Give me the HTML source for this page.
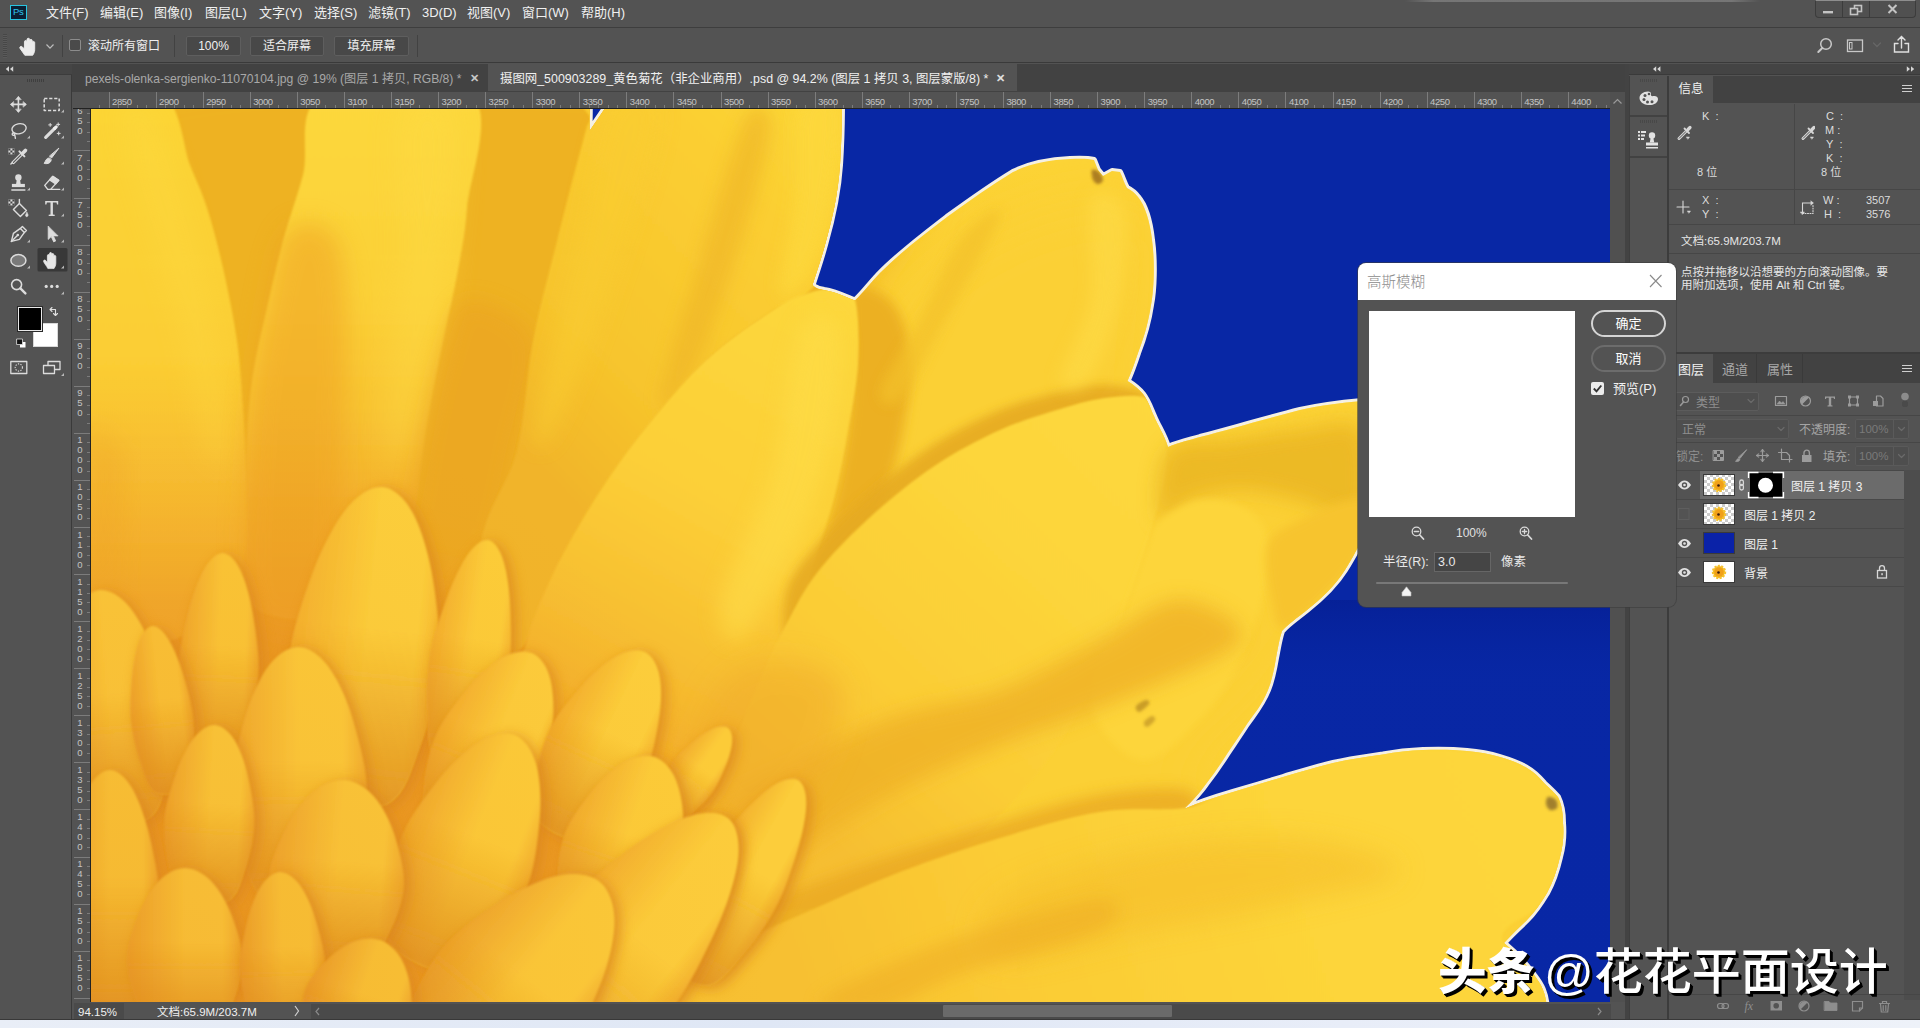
<!DOCTYPE html>
<html lang="zh-CN">
<head>
<meta charset="utf-8">
<title>Photoshop</title>
<style>
*{box-sizing:border-box;margin:0;padding:0}
html,body{width:1920px;height:1028px;overflow:hidden;background:#535353}
body{position:relative;font-family:"Liberation Sans","Noto Sans CJK SC",sans-serif;font-size:12px;color:#e6e6e6;line-height:1}
.abs{position:absolute}
.t{position:absolute;white-space:nowrap;line-height:14px;height:14px}
/* menubar */
#menubar{left:0;top:0;width:1920px;height:28px;background:#535353;border-bottom:1px solid #3e3e3e}
#menubar .t{top:6px;font-size:13px;color:#f0f0f0}
#pslogo{left:10px;top:4.500px;width:16.500px;height:15.500px;background:#0b1f33;border:1.300px solid #29c4e0;color:#31c5f0;font-size:9.500px;text-align:center;line-height:12.500px;letter-spacing:-.2px}
/* options bar */
#optbar{left:0;top:29px;width:1920px;height:34px;background:#535353;border-bottom:1px solid #3a3a3a}
.btn{position:absolute;top:7px;height:20px;background:#484848;border:1px solid #5e5e5e;border-radius:2px;text-align:center;line-height:18px;font-size:12px;color:#f0f0f0}
.vsep{position:absolute;width:1px;background:#424242}
/* tab bar */
#tabbar{left:72px;top:64px;width:1553px;height:28px;background:#424242}
#tab2{left:416px;top:0;width:529px;height:27px;background:#535353}
/* rulers */
#hruler{left:73px;top:92px;width:1537px;height:17px;background:#535353;overflow:hidden;border-bottom:1px solid #222}
#vruler{left:73px;top:109px;width:18px;height:894px;background:#535353;overflow:hidden;border-right:1px solid #222}
.rl{position:absolute;top:5px;font-size:9.5px;letter-spacing:-.4px;color:#c4c4c4;line-height:10px}
.rt{position:absolute;top:0;width:1px;height:17px;background:#7c7c7c}
.rm{position:absolute;top:13px;width:1px;height:3px;background:#7c7c7c}
.vt{position:absolute;left:1px;width:17px;height:1px;background:#7c7c7c}
.vm{position:absolute;left:14px;width:3px;height:1px;background:#7c7c7c}
.vl{position:absolute;left:3px;width:8px;text-align:center;font-size:9.5px;color:#c4c4c4;line-height:10px}
/* canvas */
#canvas{left:91px;top:109px;width:1519px;height:893px;overflow:hidden;background:#f7c62c}
/* right dock */
#rightdock{left:1669px;top:76px;width:251px;height:945px;background:#535353}
.ptabbar{position:absolute;left:0;width:251px;height:26px;background:#424242}
.ptab{position:absolute;top:0;height:26px;font-size:12px;line-height:26px;padding-top:2px;text-align:center;color:#a6a6a6}
.ptab.on{background:#535353;color:#f0f0f0}
.it{position:absolute;font-size:11px;color:#dcdcdc;white-space:nowrap;line-height:13px}
.lrow{position:absolute;left:0;width:235px;height:28px;background:#535353}
.lsel{position:absolute;left:31px;top:0;width:204px;height:28px;background:#6b6b6b}
.ln{font-size:12px;color:#f0f0f0}
.pill{width:75px;height:27px;border:2px solid #d4d4d4;border-radius:14px;text-align:center;line-height:24px;font-size:13px;color:#fff}
/* dialog */
#dlg{left:1358px;top:263px;width:318px;height:344px;background:#535353;border-radius:8px;overflow:hidden;box-shadow:0 0 0 1px rgba(60,60,60,.6)}
#dlgtitle{left:0;top:0;width:318px;height:37px;background:#fff}
</style>
</head>
<body>
<!-- MENUBAR -->
<div id="menubar" class="abs">
  <div id="pslogo" class="abs">Ps</div>
  <span class="t" style="left:46px">文件(F)</span>
  <span class="t" style="left:100px">编辑(E)</span>
  <span class="t" style="left:154px">图像(I)</span>
  <span class="t" style="left:205px">图层(L)</span>
  <span class="t" style="left:259px">文字(Y)</span>
  <span class="t" style="left:314px">选择(S)</span>
  <span class="t" style="left:368px">滤镜(T)</span>
  <span class="t" style="left:422px">3D(D)</span>
  <span class="t" style="left:467px">视图(V)</span>
  <span class="t" style="left:522px">窗口(W)</span>
  <span class="t" style="left:581px">帮助(H)</span>
  <div class="abs" style="left:1815px;top:0;width:101px;height:18px;background:#505050;border:1px solid #3c3c3c;border-top:1px solid #8e8e8e;border-radius:0 0 4px 4px"></div>
  <div class="abs" style="left:1842px;top:1px;width:1px;height:16px;background:#3c3c3c"></div>
  <div class="abs" style="left:1869px;top:1px;width:1px;height:16px;background:#3c3c3c"></div>
  <svg class="abs" style="left:1815px;top:0" width="101" height="18" viewBox="1815 0 101 18" fill="none" stroke="#c4c4c4" stroke-width="1.600"><path d="M1823,12.200h10" stroke-width="2.400"/><rect x="1854.500" y="5.500" width="7" height="6"/><rect x="1850.500" y="8.500" width="7" height="6" fill="#505050"/><path d="M1888.500,5L1896.500,13M1896.500,5L1888.500,13" stroke-width="2"/></svg>
</div>
<div class="abs" style="left:1405px;top:0;width:355px;height:2px;background:linear-gradient(90deg,rgba(160,160,160,0),rgba(160,160,160,.45) 8%,rgba(160,160,160,.45) 92%,rgba(160,160,160,0))"></div>
<!-- OPTIONS BAR -->
<div id="optbar" class="abs">
  <div class="abs" style="left:3px;top:5px;width:4px;height:24px;background:repeating-linear-gradient(#474747 0 1px,#5a5a5a 1px 2px)"></div>
  <svg class="abs" style="left:18px;top:6px" width="40" height="24" viewBox="18 35 40 24"><g transform="translate(30.300,46.600) scale(1.220,1.080)"><path d="M-4.500,8c-1-2.500-3-4-4-6.500c-.5-1.500,1-2.300,2-1.200l1.700,2V-4.500c0-1.500,2-1.500,2.100,0V-6.500c0-1.600,2.200-1.600,2.200,0V-5.500c0-1.500,2.100-1.500,2.100,0v1.700c.1-1.400,2-1.300,2,.1V3c0,2-.8,3.500-1.600,5Z" fill="#ececec" stroke="#ececec" stroke-width=".8"/></g><path d="M46.500,44.500l3.500,3.700l3.500,-3.700" fill="none" stroke="#bdbdbd" stroke-width="1.200"/></svg>
  <svg class="abs" style="left:1812px;top:5px" width="104" height="26" viewBox="1812 34 104 26" fill="none" stroke="#c8c8c8" stroke-width="1.500" stroke-linecap="round"><circle cx="1826" cy="44" r="5.300"/><path d="M1822.300,48L1818.300,52" stroke-width="2"/><rect x="1847.500" y="40" width="15" height="11.500" stroke-width="1.300"/><rect x="1849.500" y="42.500" width="2.500" height="6.500" stroke-width="1"/><path d="M1873.500,43l3.500,3.500l3.500,-3.500" stroke="#666" stroke-width="1.300"/><path d="M1898,43.500h-3.500v8.500h14v-8.500h-3.500M1901.500,48v-11M1898,40l3.500,-3.500l3.500,3.500" stroke="#e0e0e0" stroke-width="1.400"/></svg>

  <div class="vsep" style="left:62px;top:6px;height:22px"></div>
  <div class="abs" style="left:69px;top:10px;width:12px;height:12px;border:1px solid #8c8c8c;border-radius:2px;background:#4a4a4a"></div>
  <span class="t" style="left:88px;top:10px;color:#f0f0f0">滚动所有窗口</span>
  <div class="vsep" style="left:174px;top:6px;height:22px"></div>
  <div class="btn" style="left:186px;width:55px">100%</div>
  <div class="btn" style="left:250px;width:74px">适合屏幕</div>
  <div class="btn" style="left:334px;width:75px">填充屏幕</div>
  <div class="vsep" style="left:417px;top:6px;height:22px"></div>
</div>
<!-- TOOLS PANEL -->
<div id="tools" class="abs" style="left:0;top:64px;width:72px;height:957px;background:#535353;border-right:1px solid #3a3a3a">
  <div class="abs" style="left:0;top:0;width:72px;height:11px;background:#454545;border-bottom:1px solid #3c3c3c"></div>
  <svg class="abs" style="left:0;top:0" width="72" height="330" viewBox="0 64 72 330" fill="none" stroke="#dcdcdc" stroke-width="1.4" stroke-linecap="round" stroke-linejoin="round">
    <path d="M9,66.300v5.400l-3.200,-2.700ZM13.200,66.300v5.400l-3.200,-2.700Z" fill="#d6d6d6" stroke="none"/>
    <path d="M27,80.5h18" stroke="#3f3f3f" stroke-width="3" stroke-dasharray="1 1" stroke-linecap="butt"/>
    <!-- move -->
    <g transform="translate(18.4,104.4)"><path d="M0,-7V7M-7,0H7" stroke-width="1.6"/><path d="M-2.6,-5L0,-8L2.6,-5ZM-2.6,5L0,8L2.6,5ZM-5,-2.6L-8,0L-5,2.6ZM5,-2.6L8,0L5,2.6Z" fill="#dcdcdc" stroke-width=".6"/></g>
    <!-- marquee -->
    <g transform="translate(51.7,104.4)"><rect x="-7.5" y="-6" width="15" height="12" stroke-dasharray="3.2 1.8" stroke-linecap="butt" stroke-width="1.5"/></g>
    <!-- lasso -->
    <g transform="translate(18.4,130.4)"><ellipse cx="1" cy="-1.5" rx="7.2" ry="5" transform="rotate(-12)"/><path d="M-5,2.2c-1.6,.6-1.6,2.6,0,2.8c1.4,.1,1.6-1.2,.6-1.8M-3.6,4.6L-3,8"/></g>
    <!-- wand -->
    <g transform="translate(51.7,130.4)"><path d="M-6,7L3,-2" stroke-width="3.2"/><path d="M3,-2L4.5,-3.5" stroke-width="3.2" stroke="#f0f0f0"/><path d="M-1.5,-7v3M-3,-5.5h3M6.5,-7.5v3M5,-6h3M7,1.5v3M5.5,3h3" stroke-width="1"/></g>
    <!-- eyedropper -->
    <g transform="translate(18.4,156.4)"><path d="M-5,6L3,-2" stroke-width="3.4"/><path d="M-5,6L3,-2" stroke-width="1.2" stroke="#535353"/><path d="M1,-5L6,0" stroke-width="2"/><path d="M4,-3L7,-6" stroke-width="3.6"/><path d="M-7.5,7.5L-6,6" stroke-width="1.4"/><rect x="-10" y="-8" width="6" height="6" fill="#dcdcdc" stroke="none"/><path d="M-10,-8h2v2h-2zM-6,-8h2v2h-2zM-8,-6h2v2h-2zM-10,-4h2v2h-2zM-6,-4h2v2h-2z" fill="#444" stroke="none"/></g>
    <!-- brush -->
    <g transform="translate(51.7,156.4)"><path d="M7,-8L0,1.5L-2,0Z" fill="#dcdcdc" stroke-width="1"/><path d="M-2.5,1.5c-3,0-3.5,3-5,5.5c4,1,7-1,7-3.500Z" fill="#dcdcdc" stroke-width="1"/></g>
    <!-- stamp -->
    <g transform="translate(18.4,182.4)"><circle cx="0" cy="-5" r="3.2" fill="#dcdcdc" stroke="none"/><path d="M-1.6,-3h3.2l.8,5h-4.800Z" fill="#dcdcdc" stroke="none"/><rect x="-6.500" y="1.5" width="13" height="3.200" fill="#dcdcdc" stroke="none"/><path d="M-6.500,7.500h13" stroke-width="1.500"/></g>
    <!-- eraser -->
    <g transform="translate(51.7,182.4)"><path d="M-7,3L1,-6L7,-2L-1,7H-4Z"/><path d="M-2,-2.600L4,1.400L7,-2L1,-6Z" fill="#dcdcdc"/><path d="M-1,7H8"/></g>
    <!-- bucket -->
    <g transform="translate(18.4,208.4)"><path d="M-5,1L1,-5L8,2L2,8Z"/><path d="M1,-5V-9" /><path d="M8.500,4c1,1.500,1.500,2.500,1,3.500c-.5,1-2,1-2.300,0c-.3-1,.4-2,1.300-3.500Z" fill="#dcdcdc" stroke-width=".6"/><rect x="-10" y="-9" width="6" height="6" fill="#dcdcdc" stroke="none"/><path d="M-10,-9h2v2h-2zM-6,-9h2v2h-2zM-8,-7h2v2h-2zM-10,-5h2v2h-2zM-6,-5h2v2h-2z" fill="#444" stroke="none"/></g>
    <!-- T -->
    <g transform="translate(51.7,208.4)"><path d="M-6.500,-7.500H6.500V-4H5.300L4.800,-5.800H1.200V6L3,6.400V7.500H-3V6.400L-1.200,6V-5.800H-4.800L-5.300,-4H-6.500Z" fill="#dcdcdc" stroke="none"/></g>
    <!-- pen -->
    <g transform="translate(18.4,234.4)"><path d="M-7,7L-5,-1L2,-6L6,-2L1,5Z"/><path d="M-7,7L-1.500,1.500"/><circle cx="-.6" cy=".6" r="1.300" fill="#dcdcdc" stroke="none"/><path d="M2,-6L4,-8L8,-4L6,-2" /></g>
    <!-- arrow -->
    <g transform="translate(51.7,234.4)"><path d="M-3.500,-8V5L-.5,2.200L2,7.500L4,6.500L1.700,1.500H6Z" fill="#dcdcdc" stroke-width=".8"/></g>
    <!-- ellipse -->
    <g transform="translate(18.4,260.4)"><ellipse cx="0" cy="0" rx="7.500" ry="5.800" fill="#7a7a7a" stroke-width="1.500"/></g>
    <!-- hand selected -->
    <rect x="37.500" y="248" width="30" height="23.500" rx="1.500" fill="#383838" stroke="none"/>
    <g transform="translate(52.200,260.2)"><path d="M-4.500,8c-1-2.500-3-4-4-6.500c-.5-1.500,1-2.300,2-1.200l1.700,2V-4.500c0-1.500,2-1.500,2.100,0V-6.500c0-1.600,2.200-1.600,2.200,0V-5.500c0-1.500,2.100-1.500,2.100,0v1.700c.1-1.400,2-1.300,2,.1V3c0,2-.8,3.500-1.600,5Z" fill="#e6e6e6" stroke="#e6e6e6" stroke-width=".8"/></g>
    <!-- zoom -->
    <g transform="translate(18.4,286.4)"><circle cx="-1.800" cy="-1.800" r="5" stroke-width="1.600"/><path d="M2,2L7,7" stroke-width="2.400"/></g>
    <!-- dots -->
    <g transform="translate(51.700,286.4)" fill="#dcdcdc" stroke="none"><circle cx="-5.500" cy="0" r="1.600"/><circle cx="0" cy="0" r="1.600"/><circle cx="5.500" cy="0" r="1.600"/></g>
    <!-- corner flyout marks -->
    <g fill="#b8b8b8" stroke="none"><path d="M64,109.500v3h-3zM30,135.500v3h-3zM64,135.500v3h-3zM64,161.500v3h-3zM30,187.500v3h-3zM64,187.500v3h-3zM64,213.500v3h-3zM30,239.500v3h-3zM64,239.500v3h-3zM30,265.500v3h-3zM64,265.500v3h-3zM64,291.500v3h-3zM64,373v3h-3z"/></g>
    <!-- swap arrows -->
    <path d="M50,309.500h5.500v6M50,309.500l2,-2M50,309.500l2,2M55.500,315.500l-2,-2M55.500,315.500l2,-2" stroke-width="1.100" stroke="#e0e0e0"/>
    <!-- default colors -->
    <rect x="20" y="342" width="5.500" height="5.500" fill="#fff" stroke="none"/><rect x="17" y="339" width="5.500" height="5.500" fill="#111" stroke="#ddd" stroke-width=".8"/>
    <!-- quick mask -->
    <rect x="10.800" y="361.500" width="16" height="12" stroke-width="1.300"/><circle cx="18.800" cy="367.500" r="3.600" stroke-dasharray="1.300 1.300" stroke-width="1.100" stroke-linecap="butt"/>
    <!-- screen mode -->
    <rect x="48" y="361.500" width="12" height="8" stroke-width="1.300"/><rect x="43.500" y="365.500" width="11" height="8" fill="#535353" stroke-width="1.300"/>
  </svg>
  <div class="abs" style="left:33px;top:259px;width:25px;height:24px;background:#fff;border:1px solid #d8d8d8"></div>
  <div class="abs" style="left:18px;top:243px;width:24px;height:24px;background:#000;border:1px solid #e8e8e8;box-shadow:0 0 0 1px #2a2a2a"></div>
</div>
<!-- TAB BAR -->
<div id="tabbar" class="abs">
  <span class="t" style="left:13px;top:8px;color:#a8a8a8;font-size:12.150px">pexels-olenka-sergienko-11070104.jpg @ 19% (图层 1 拷贝, RGB/8) *</span>
  <span class="t" style="left:398px;top:7px;color:#c8c8c8;font-weight:bold;font-size:11px">✕</span>
  <div id="tab2" class="abs">
    <span class="t" style="left:12px;top:8px;color:#f0f0f0;font-size:12.420px">摄图网_500903289_黄色菊花（非企业商用）.psd @ 94.2% (图层 1 拷贝 3, 图层蒙版/8) *</span>
    <span class="t" style="left:508px;top:7px;color:#e0e0e0;font-weight:bold;font-size:11px">✕</span>
  </div>
</div>
<!-- RULERS -->
<div id="hruler" class="abs"><i class="rm" style="left:26.1px"></i><i class="rt" style="left:35.5px"></i><span class="rl" style="left:39.0px">2850</span><i class="rm" style="left:44.9px"></i><i class="rm" style="left:54.3px"></i><i class="rm" style="left:63.7px"></i><i class="rm" style="left:73.2px"></i><i class="rt" style="left:82.6px"></i><span class="rl" style="left:86.1px">2900</span><i class="rm" style="left:92.0px"></i><i class="rm" style="left:101.4px"></i><i class="rm" style="left:110.8px"></i><i class="rm" style="left:120.2px"></i><i class="rt" style="left:129.7px"></i><span class="rl" style="left:133.2px">2950</span><i class="rm" style="left:139.1px"></i><i class="rm" style="left:148.5px"></i><i class="rm" style="left:157.9px"></i><i class="rm" style="left:167.3px"></i><i class="rt" style="left:176.7px"></i><span class="rl" style="left:180.2px">3000</span><i class="rm" style="left:186.1px"></i><i class="rm" style="left:195.6px"></i><i class="rm" style="left:205.0px"></i><i class="rm" style="left:214.4px"></i><i class="rt" style="left:223.8px"></i><span class="rl" style="left:227.3px">3050</span><i class="rm" style="left:233.2px"></i><i class="rm" style="left:242.6px"></i><i class="rm" style="left:252.0px"></i><i class="rm" style="left:261.5px"></i><i class="rt" style="left:270.9px"></i><span class="rl" style="left:274.4px">3100</span><i class="rm" style="left:280.3px"></i><i class="rm" style="left:289.7px"></i><i class="rm" style="left:299.1px"></i><i class="rm" style="left:308.5px"></i><i class="rt" style="left:318.0px"></i><span class="rl" style="left:321.5px">3150</span><i class="rm" style="left:327.4px"></i><i class="rm" style="left:336.8px"></i><i class="rm" style="left:346.2px"></i><i class="rm" style="left:355.6px"></i><i class="rt" style="left:365.0px"></i><span class="rl" style="left:368.5px">3200</span><i class="rm" style="left:374.4px"></i><i class="rm" style="left:383.9px"></i><i class="rm" style="left:393.3px"></i><i class="rm" style="left:402.7px"></i><i class="rt" style="left:412.1px"></i><span class="rl" style="left:415.6px">3250</span><i class="rm" style="left:421.5px"></i><i class="rm" style="left:430.9px"></i><i class="rm" style="left:440.3px"></i><i class="rm" style="left:449.8px"></i><i class="rt" style="left:459.2px"></i><span class="rl" style="left:462.7px">3300</span><i class="rm" style="left:468.6px"></i><i class="rm" style="left:478.0px"></i><i class="rm" style="left:487.4px"></i><i class="rm" style="left:496.8px"></i><i class="rt" style="left:506.2px"></i><span class="rl" style="left:509.8px">3350</span><i class="rm" style="left:515.7px"></i><i class="rm" style="left:525.1px"></i><i class="rm" style="left:534.5px"></i><i class="rm" style="left:543.9px"></i><i class="rt" style="left:553.3px"></i><span class="rl" style="left:556.8px">3400</span><i class="rm" style="left:562.7px"></i><i class="rm" style="left:572.2px"></i><i class="rm" style="left:581.6px"></i><i class="rm" style="left:591.0px"></i><i class="rt" style="left:600.4px"></i><span class="rl" style="left:603.9px">3450</span><i class="rm" style="left:609.8px"></i><i class="rm" style="left:619.2px"></i><i class="rm" style="left:628.6px"></i><i class="rm" style="left:638.1px"></i><i class="rt" style="left:647.5px"></i><span class="rl" style="left:651.0px">3500</span><i class="rm" style="left:656.9px"></i><i class="rm" style="left:666.3px"></i><i class="rm" style="left:675.7px"></i><i class="rm" style="left:685.1px"></i><i class="rt" style="left:694.6px"></i><span class="rl" style="left:698.1px">3550</span><i class="rm" style="left:704.0px"></i><i class="rm" style="left:713.4px"></i><i class="rm" style="left:722.8px"></i><i class="rm" style="left:732.2px"></i><i class="rt" style="left:741.6px"></i><span class="rl" style="left:745.1px">3600</span><i class="rm" style="left:751.0px"></i><i class="rm" style="left:760.5px"></i><i class="rm" style="left:769.9px"></i><i class="rm" style="left:779.3px"></i><i class="rt" style="left:788.7px"></i><span class="rl" style="left:792.2px">3650</span><i class="rm" style="left:798.1px"></i><i class="rm" style="left:807.5px"></i><i class="rm" style="left:816.9px"></i><i class="rm" style="left:826.4px"></i><i class="rt" style="left:835.8px"></i><span class="rl" style="left:839.3px">3700</span><i class="rm" style="left:845.2px"></i><i class="rm" style="left:854.6px"></i><i class="rm" style="left:864.0px"></i><i class="rm" style="left:873.4px"></i><i class="rt" style="left:882.9px"></i><span class="rl" style="left:886.4px">3750</span><i class="rm" style="left:892.3px"></i><i class="rm" style="left:901.7px"></i><i class="rm" style="left:911.1px"></i><i class="rm" style="left:920.5px"></i><i class="rt" style="left:929.9px"></i><span class="rl" style="left:933.4px">3800</span><i class="rm" style="left:939.3px"></i><i class="rm" style="left:948.8px"></i><i class="rm" style="left:958.2px"></i><i class="rm" style="left:967.6px"></i><i class="rt" style="left:977.0px"></i><span class="rl" style="left:980.5px">3850</span><i class="rm" style="left:986.4px"></i><i class="rm" style="left:995.8px"></i><i class="rm" style="left:1005.2px"></i><i class="rm" style="left:1014.7px"></i><i class="rt" style="left:1024.1px"></i><span class="rl" style="left:1027.6px">3900</span><i class="rm" style="left:1033.5px"></i><i class="rm" style="left:1042.9px"></i><i class="rm" style="left:1052.3px"></i><i class="rm" style="left:1061.7px"></i><i class="rt" style="left:1071.2px"></i><span class="rl" style="left:1074.7px">3950</span><i class="rm" style="left:1080.6px"></i><i class="rm" style="left:1090.0px"></i><i class="rm" style="left:1099.4px"></i><i class="rm" style="left:1108.8px"></i><i class="rt" style="left:1118.2px"></i><span class="rl" style="left:1121.7px">4000</span><i class="rm" style="left:1127.6px"></i><i class="rm" style="left:1137.1px"></i><i class="rm" style="left:1146.5px"></i><i class="rm" style="left:1155.9px"></i><i class="rt" style="left:1165.3px"></i><span class="rl" style="left:1168.8px">4050</span><i class="rm" style="left:1174.7px"></i><i class="rm" style="left:1184.1px"></i><i class="rm" style="left:1193.5px"></i><i class="rm" style="left:1203.0px"></i><i class="rt" style="left:1212.4px"></i><span class="rl" style="left:1215.9px">4100</span><i class="rm" style="left:1221.8px"></i><i class="rm" style="left:1231.2px"></i><i class="rm" style="left:1240.6px"></i><i class="rm" style="left:1250.0px"></i><i class="rt" style="left:1259.5px"></i><span class="rl" style="left:1263.0px">4150</span><i class="rm" style="left:1268.9px"></i><i class="rm" style="left:1278.3px"></i><i class="rm" style="left:1287.7px"></i><i class="rm" style="left:1297.1px"></i><i class="rt" style="left:1306.5px"></i><span class="rl" style="left:1310.0px">4200</span><i class="rm" style="left:1315.9px"></i><i class="rm" style="left:1325.4px"></i><i class="rm" style="left:1334.8px"></i><i class="rm" style="left:1344.2px"></i><i class="rt" style="left:1353.6px"></i><span class="rl" style="left:1357.1px">4250</span><i class="rm" style="left:1363.0px"></i><i class="rm" style="left:1372.4px"></i><i class="rm" style="left:1381.8px"></i><i class="rm" style="left:1391.3px"></i><i class="rt" style="left:1400.7px"></i><span class="rl" style="left:1404.2px">4300</span><i class="rm" style="left:1410.1px"></i><i class="rm" style="left:1419.5px"></i><i class="rm" style="left:1428.9px"></i><i class="rm" style="left:1438.3px"></i><i class="rt" style="left:1447.8px"></i><span class="rl" style="left:1451.2px">4350</span><i class="rm" style="left:1457.2px"></i><i class="rm" style="left:1466.6px"></i><i class="rm" style="left:1476.0px"></i><i class="rm" style="left:1485.4px"></i><i class="rt" style="left:1494.8px"></i><span class="rl" style="left:1498.3px">4400</span><i class="rm" style="left:1504.2px"></i><i class="rm" style="left:1513.7px"></i><i class="rm" style="left:1523.1px"></i><i class="rm" style="left:1532.5px"></i></div>
<div id="vruler" class="abs"><i class="vt" style="top:-5.7px"></i><span class="vl" style="top:-3.2px">6</span><span class="vl" style="top:6.8px">5</span><span class="vl" style="top:16.8px">0</span><i class="vm" style="top:3.7px"></i><i class="vm" style="top:13.1px"></i><i class="vm" style="top:22.5px"></i><i class="vm" style="top:32.0px"></i><i class="vt" style="top:41.4px"></i><span class="vl" style="top:43.9px">7</span><span class="vl" style="top:53.9px">0</span><span class="vl" style="top:63.9px">0</span><i class="vm" style="top:50.8px"></i><i class="vm" style="top:60.2px"></i><i class="vm" style="top:69.6px"></i><i class="vm" style="top:79.0px"></i><i class="vt" style="top:88.5px"></i><span class="vl" style="top:91.0px">7</span><span class="vl" style="top:101.0px">5</span><span class="vl" style="top:111.0px">0</span><i class="vm" style="top:97.9px"></i><i class="vm" style="top:107.3px"></i><i class="vm" style="top:116.7px"></i><i class="vm" style="top:126.1px"></i><i class="vt" style="top:135.5px"></i><span class="vl" style="top:138.0px">8</span><span class="vl" style="top:148.0px">0</span><span class="vl" style="top:158.0px">0</span><i class="vm" style="top:144.9px"></i><i class="vm" style="top:154.4px"></i><i class="vm" style="top:163.8px"></i><i class="vm" style="top:173.2px"></i><i class="vt" style="top:182.6px"></i><span class="vl" style="top:185.1px">8</span><span class="vl" style="top:195.1px">5</span><span class="vl" style="top:205.1px">0</span><i class="vm" style="top:192.0px"></i><i class="vm" style="top:201.4px"></i><i class="vm" style="top:210.8px"></i><i class="vm" style="top:220.3px"></i><i class="vt" style="top:229.7px"></i><span class="vl" style="top:232.2px">9</span><span class="vl" style="top:242.2px">0</span><span class="vl" style="top:252.2px">0</span><i class="vm" style="top:239.1px"></i><i class="vm" style="top:248.5px"></i><i class="vm" style="top:257.9px"></i><i class="vm" style="top:267.3px"></i><i class="vt" style="top:276.8px"></i><span class="vl" style="top:279.3px">9</span><span class="vl" style="top:289.3px">5</span><span class="vl" style="top:299.3px">0</span><i class="vm" style="top:286.2px"></i><i class="vm" style="top:295.6px"></i><i class="vm" style="top:305.0px"></i><i class="vm" style="top:314.4px"></i><i class="vt" style="top:323.8px"></i><span class="vl" style="top:326.3px">1</span><span class="vl" style="top:336.3px">0</span><span class="vl" style="top:346.3px">0</span><span class="vl" style="top:356.3px">0</span><i class="vm" style="top:333.2px"></i><i class="vm" style="top:342.7px"></i><i class="vm" style="top:352.1px"></i><i class="vm" style="top:361.5px"></i><i class="vt" style="top:370.9px"></i><span class="vl" style="top:373.4px">1</span><span class="vl" style="top:383.4px">0</span><span class="vl" style="top:393.4px">5</span><span class="vl" style="top:403.4px">0</span><i class="vm" style="top:380.3px"></i><i class="vm" style="top:389.7px"></i><i class="vm" style="top:399.1px"></i><i class="vm" style="top:408.6px"></i><i class="vt" style="top:418.0px"></i><span class="vl" style="top:420.5px">1</span><span class="vl" style="top:430.5px">1</span><span class="vl" style="top:440.5px">0</span><span class="vl" style="top:450.5px">0</span><i class="vm" style="top:427.4px"></i><i class="vm" style="top:436.8px"></i><i class="vm" style="top:446.2px"></i><i class="vm" style="top:455.6px"></i><i class="vt" style="top:465.1px"></i><span class="vl" style="top:467.6px">1</span><span class="vl" style="top:477.6px">1</span><span class="vl" style="top:487.6px">5</span><span class="vl" style="top:497.6px">0</span><i class="vm" style="top:474.5px"></i><i class="vm" style="top:483.9px"></i><i class="vm" style="top:493.3px"></i><i class="vm" style="top:502.7px"></i><i class="vt" style="top:512.1px"></i><span class="vl" style="top:514.6px">1</span><span class="vl" style="top:524.6px">2</span><span class="vl" style="top:534.6px">0</span><span class="vl" style="top:544.6px">0</span><i class="vm" style="top:521.5px"></i><i class="vm" style="top:531.0px"></i><i class="vm" style="top:540.4px"></i><i class="vm" style="top:549.8px"></i><i class="vt" style="top:559.2px"></i><span class="vl" style="top:561.7px">1</span><span class="vl" style="top:571.7px">2</span><span class="vl" style="top:581.7px">5</span><span class="vl" style="top:591.7px">0</span><i class="vm" style="top:568.6px"></i><i class="vm" style="top:578.0px"></i><i class="vm" style="top:587.4px"></i><i class="vm" style="top:596.9px"></i><i class="vt" style="top:606.3px"></i><span class="vl" style="top:608.8px">1</span><span class="vl" style="top:618.8px">3</span><span class="vl" style="top:628.8px">0</span><span class="vl" style="top:638.8px">0</span><i class="vm" style="top:615.7px"></i><i class="vm" style="top:625.1px"></i><i class="vm" style="top:634.5px"></i><i class="vm" style="top:643.9px"></i><i class="vt" style="top:653.4px"></i><span class="vl" style="top:655.9px">1</span><span class="vl" style="top:665.9px">3</span><span class="vl" style="top:675.9px">5</span><span class="vl" style="top:685.9px">0</span><i class="vm" style="top:662.8px"></i><i class="vm" style="top:672.2px"></i><i class="vm" style="top:681.6px"></i><i class="vm" style="top:691.0px"></i><i class="vt" style="top:700.4px"></i><span class="vl" style="top:702.9px">1</span><span class="vl" style="top:712.9px">4</span><span class="vl" style="top:722.9px">0</span><span class="vl" style="top:732.9px">0</span><i class="vm" style="top:709.8px"></i><i class="vm" style="top:719.3px"></i><i class="vm" style="top:728.7px"></i><i class="vm" style="top:738.1px"></i><i class="vt" style="top:747.5px"></i><span class="vl" style="top:750.0px">1</span><span class="vl" style="top:760.0px">4</span><span class="vl" style="top:770.0px">5</span><span class="vl" style="top:780.0px">0</span><i class="vm" style="top:756.9px"></i><i class="vm" style="top:766.3px"></i><i class="vm" style="top:775.7px"></i><i class="vm" style="top:785.2px"></i><i class="vt" style="top:794.6px"></i><span class="vl" style="top:797.1px">1</span><span class="vl" style="top:807.1px">5</span><span class="vl" style="top:817.1px">0</span><span class="vl" style="top:827.1px">0</span><i class="vm" style="top:804.0px"></i><i class="vm" style="top:813.4px"></i><i class="vm" style="top:822.8px"></i><i class="vm" style="top:832.2px"></i><i class="vt" style="top:841.6px"></i><span class="vl" style="top:844.1px">1</span><span class="vl" style="top:854.1px">5</span><span class="vl" style="top:864.1px">5</span><span class="vl" style="top:874.1px">0</span><i class="vm" style="top:851.1px"></i><i class="vm" style="top:860.5px"></i><i class="vm" style="top:869.9px"></i><i class="vm" style="top:879.3px"></i><i class="vt" style="top:888.7px"></i><span class="vl" style="top:891.2px">1</span><span class="vl" style="top:901.2px">6</span><span class="vl" style="top:911.2px">0</span><span class="vl" style="top:921.2px">0</span><i class="vm" style="top:898.1px"></i><i class="vm" style="top:907.6px"></i><i class="vm" style="top:917.0px"></i><i class="vm" style="top:926.4px"></i></div>
<!-- CANVAS -->
<div id="canvas" class="abs">
<svg id="flower" width="1519" height="893" viewBox="91 109 1519 893" style="display:block">
<defs><linearGradient id="g1" gradientUnits="userSpaceOnUse" x1="0" y1="600" x2="0" y2="1002"><stop offset="0" stop-color="#041c8e" stop-opacity="0.6"/><stop offset="0.2" stop-color="#0726a2" stop-opacity="0.2"/><stop offset="1" stop-color="#0a2aa8" stop-opacity="0"/></linearGradient><clipPath id="fc"><path d="M85,100 L589.5,100 L589.8,109 L589.5,131 L604.5,109 L604.5,100 L842,100 C842,125 841,150 840,165 C838,195 832,220 825.5,243 C821,260 816,274 812.5,285 C816,289 820,289 824,290 C836,292 846,297 855,300.5 C864,292 872,281 880,273 C902,251 925,234 947,217 C969,201 990,186 1013,172 C1031,163 1050,160 1070,159 C1080,158.5 1088,158.5 1094,160 L1098,170 L1103,176 L1112,171 L1120,172 C1123,178 1124,183 1127,188 C1131,190 1135,193 1138,197 C1145,205 1150,222 1152,240 C1155,262 1154,290 1151,305 C1148,325 1143,340 1138,353 C1134,365 1131,373 1127.5,381 C1134,385 1139,389 1143,394 C1149,402 1151,410 1154,416 C1158,426 1164,434 1168,447 C1180,442 1190,440 1200,437 C1230,429 1265,419 1300,410 C1322,405 1340,403 1362,401 L1362,540 C1355,553 1350,562 1345,570 C1335,586 1322,598 1307,610 C1297,618 1288,624 1282,631 C1279,640 1278,648 1276,658 C1274,670 1272,680 1268,690 C1262,705 1254,714 1247,724 C1240,735 1233,745 1227,754 C1220,765 1213,775 1206,784 C1199,794 1192,801 1184,809 C1200,802 1216,797 1233,792 C1250,787 1266,782 1283,777 C1300,772 1316,767 1333,763 C1350,759 1366,757 1383,754.5 C1396,752 1410,750.5 1423,750 C1438,749.5 1452,749.5 1467,751 C1479,752 1490,754 1500,757 C1510,760 1519,763 1527,768 C1534,772 1539,777 1544,783 C1548,787 1552,790 1558,797 C1562,805 1563,814 1563,823 C1564,835 1563,846 1560,857 C1557,870 1553,882 1547,893 C1541,903 1535,912 1527,920 C1520,927 1512,934 1504,943 C1515,952 1526,964 1534,975 C1541,984 1546,992 1547,1010 L85,1010 Z"/></clipPath><radialGradient id="g2" gradientUnits="userSpaceOnUse" cx="140" cy="1010" r="1250"><stop offset="0" stop-color="#eda02a"/><stop offset="0.3" stop-color="#f0a82b"/><stop offset="0.5" stop-color="#f3b32b"/><stop offset="0.6" stop-color="#f6c22d"/><stop offset="0.8" stop-color="#fbcf33"/><stop offset="1" stop-color="#fcd335"/></radialGradient><filter id="b20" x="-40%" y="-40%" width="180%" height="180%"><feGaussianBlur stdDeviation="20"/></filter><filter id="b30" x="-40%" y="-40%" width="180%" height="180%"><feGaussianBlur stdDeviation="30"/></filter><linearGradient id="g3" gradientUnits="userSpaceOnUse" x1="0" y1="100" x2="0" y2="610"><stop offset="0" stop-color="#fcd536"/><stop offset="0.5" stop-color="#fbce34"/><stop offset="0.7" stop-color="#f8c031"/><stop offset="0.9" stop-color="#f3af2c"/><stop offset="1" stop-color="#f0a62b"/></linearGradient><filter id="b1" x="-40%" y="-40%" width="180%" height="180%"><feGaussianBlur stdDeviation="1"/></filter><filter id="b14" x="-40%" y="-40%" width="180%" height="180%"><feGaussianBlur stdDeviation="14"/></filter><filter id="b12" x="-40%" y="-40%" width="180%" height="180%"><feGaussianBlur stdDeviation="12"/></filter><linearGradient id="g4" gradientUnits="userSpaceOnUse" x1="0" y1="100" x2="0" y2="610"><stop offset="0" stop-color="#fdd83c"/><stop offset="0.4" stop-color="#fbd038"/><stop offset="0.6" stop-color="#f8c432"/><stop offset="0.8" stop-color="#f3b12c"/><stop offset="1" stop-color="#eea129"/></linearGradient><filter id="b10" x="-40%" y="-40%" width="180%" height="180%"><feGaussianBlur stdDeviation="10"/></filter><linearGradient id="g5" gradientUnits="userSpaceOnUse" x1="520" y1="450" x2="840" y2="150"><stop offset="0" stop-color="#f1b42a"/><stop offset="0.3" stop-color="#f7c52d"/><stop offset="0.8" stop-color="#fbcf32"/><stop offset="1" stop-color="#fcd537"/></linearGradient><filter id="b8" x="-40%" y="-40%" width="180%" height="180%"><feGaussianBlur stdDeviation="8"/></filter><filter id="b6" x="-40%" y="-40%" width="180%" height="180%"><feGaussianBlur stdDeviation="6"/></filter><linearGradient id="g6" gradientUnits="userSpaceOnUse" x1="600" y1="720" x2="840" y2="295"><stop offset="0" stop-color="#f3b02c"/><stop offset="0.2" stop-color="#f7bf31"/><stop offset="0.5" stop-color="#fccf38"/><stop offset="1" stop-color="#fdd83c"/></linearGradient><filter id="b5" x="-40%" y="-40%" width="180%" height="180%"><feGaussianBlur stdDeviation="5"/></filter><linearGradient id="g7" gradientUnits="userSpaceOnUse" x1="780" y1="800" x2="1150" y2="400"><stop offset="0" stop-color="#f6be30"/><stop offset="0.3" stop-color="#fbcd36"/><stop offset="0.7" stop-color="#fdd63b"/><stop offset="1" stop-color="#fdd83d"/></linearGradient><filter id="b3" x="-40%" y="-40%" width="180%" height="180%"><feGaussianBlur stdDeviation="3"/></filter><filter id="b7" x="-40%" y="-40%" width="180%" height="180%"><feGaussianBlur stdDeviation="7"/></filter><linearGradient id="g8" gradientUnits="userSpaceOnUse" x1="800" y1="1000" x2="1500" y2="760"><stop offset="0" stop-color="#f7c030"/><stop offset="0.3" stop-color="#fbcc35"/><stop offset="0.7" stop-color="#fdd53a"/><stop offset="1" stop-color="#fdd63a"/></linearGradient><linearGradient id="g9" gradientUnits="userSpaceOnUse" x1="284.5" y1="634.8" x2="448.5" y2="652.2"><stop offset="0" stop-color="#f3ae2c"/><stop offset="0.5" stop-color="#fcce3a"/><stop offset="0.8" stop-color="#fcce3a"/><stop offset="1" stop-color="#f3ae2c"/></linearGradient><linearGradient id="g10" gradientUnits="userSpaceOnUse" x1="350" y1="800" x2="368.1" y2="627.9"><stop offset="0" stop-color="#d9841a" stop-opacity="0.7"/><stop offset="1" stop-color="#d9841a" stop-opacity="0"/></linearGradient><linearGradient id="g11" gradientUnits="userSpaceOnUse" x1="428" y1="643.5" x2="515" y2="656.5"><stop offset="0" stop-color="#f2ab2b"/><stop offset="0.5" stop-color="#fccc39"/><stop offset="0.8" stop-color="#fccc39"/><stop offset="1" stop-color="#f2ab2b"/></linearGradient><linearGradient id="g12" gradientUnits="userSpaceOnUse" x1="455" y1="760" x2="473.1" y2="639"><stop offset="0" stop-color="#d9841a" stop-opacity="0.7"/><stop offset="1" stop-color="#d9841a" stop-opacity="0"/></linearGradient><linearGradient id="g13" gradientUnits="userSpaceOnUse" x1="175" y1="654.8" x2="263" y2="658.2"><stop offset="0" stop-color="#eea229"/><stop offset="0.5" stop-color="#fac536"/><stop offset="0.8" stop-color="#fac536"/><stop offset="1" stop-color="#eea229"/></linearGradient><linearGradient id="g14" gradientUnits="userSpaceOnUse" x1="215" y1="760" x2="219.4" y2="646.1"><stop offset="0" stop-color="#d9841a" stop-opacity="0.7"/><stop offset="1" stop-color="#d9841a" stop-opacity="0"/></linearGradient><linearGradient id="g15" gradientUnits="userSpaceOnUse" x1="44.2" y1="710.7" x2="175.8" y2="699.3"><stop offset="0" stop-color="#eda029"/><stop offset="0.5" stop-color="#fac637"/><stop offset="0.8" stop-color="#fac637"/><stop offset="1" stop-color="#eda029"/></linearGradient><linearGradient id="g16" gradientUnits="userSpaceOnUse" x1="120" y1="820" x2="109" y2="693.5"><stop offset="0" stop-color="#d9841a" stop-opacity="0.7"/><stop offset="1" stop-color="#d9841a" stop-opacity="0"/></linearGradient><linearGradient id="g17" gradientUnits="userSpaceOnUse" x1="127.1" y1="711.7" x2="194.9" y2="704.3"><stop offset="0" stop-color="#eb9c27"/><stop offset="0.5" stop-color="#f9c134"/><stop offset="0.8" stop-color="#f9c134"/><stop offset="1" stop-color="#eb9c27"/></linearGradient><linearGradient id="g18" gradientUnits="userSpaceOnUse" x1="170" y1="790" x2="160.1" y2="699.8"><stop offset="0" stop-color="#d9841a" stop-opacity="0.7"/><stop offset="1" stop-color="#d9841a" stop-opacity="0"/></linearGradient><linearGradient id="g19" gradientUnits="userSpaceOnUse" x1="435" y1="722.4" x2="552" y2="770.6"><stop offset="0" stop-color="#f2aa2b"/><stop offset="0.5" stop-color="#fccc3a"/><stop offset="0.8" stop-color="#fccc3a"/><stop offset="1" stop-color="#f2aa2b"/></linearGradient><linearGradient id="g20" gradientUnits="userSpaceOnUse" x1="455" y1="840" x2="497.4" y2="737.1"><stop offset="0" stop-color="#d9841a" stop-opacity="0.7"/><stop offset="1" stop-color="#d9841a" stop-opacity="0"/></linearGradient><linearGradient id="g21" gradientUnits="userSpaceOnUse" x1="550.4" y1="716.1" x2="654.6" y2="765.9"><stop offset="0" stop-color="#f2ab2b"/><stop offset="0.5" stop-color="#fccd3a"/><stop offset="0.8" stop-color="#fccd3a"/><stop offset="1" stop-color="#f2ab2b"/></linearGradient><linearGradient id="g22" gradientUnits="userSpaceOnUse" x1="560" y1="830" x2="606.8" y2="732.1"><stop offset="0" stop-color="#d9841a" stop-opacity="0.7"/><stop offset="1" stop-color="#d9841a" stop-opacity="0"/></linearGradient><linearGradient id="g23" gradientUnits="userSpaceOnUse" x1="224.8" y1="774.1" x2="373.2" y2="772.9"><stop offset="0" stop-color="#eea42a"/><stop offset="0.5" stop-color="#fbc939"/><stop offset="0.8" stop-color="#fbc939"/><stop offset="1" stop-color="#eea42a"/></linearGradient><linearGradient id="g24" gradientUnits="userSpaceOnUse" x1="300" y1="900" x2="298.9" y2="760.9"><stop offset="0" stop-color="#d9841a" stop-opacity="0.7"/><stop offset="1" stop-color="#d9841a" stop-opacity="0"/></linearGradient><linearGradient id="g25" gradientUnits="userSpaceOnUse" x1="160.6" y1="809.7" x2="259.4" y2="815.3"><stop offset="0" stop-color="#eda029"/><stop offset="0.5" stop-color="#fac737"/><stop offset="0.8" stop-color="#fac737"/><stop offset="1" stop-color="#eda029"/></linearGradient><linearGradient id="g26" gradientUnits="userSpaceOnUse" x1="205" y1="900" x2="210.5" y2="803.8"><stop offset="0" stop-color="#d9841a" stop-opacity="0.7"/><stop offset="1" stop-color="#d9841a" stop-opacity="0"/></linearGradient><linearGradient id="g27" gradientUnits="userSpaceOnUse" x1="55" y1="890" x2="165" y2="890"><stop offset="0" stop-color="#ea9a27"/><stop offset="0.5" stop-color="#f9c335"/><stop offset="0.8" stop-color="#f9c335"/><stop offset="1" stop-color="#ea9a27"/></linearGradient><linearGradient id="g28" gradientUnits="userSpaceOnUse" x1="110" y1="1010" x2="110" y2="878"><stop offset="0" stop-color="#d9841a" stop-opacity="0.7"/><stop offset="1" stop-color="#d9841a" stop-opacity="0"/></linearGradient><linearGradient id="g29" gradientUnits="userSpaceOnUse" x1="674.2" y1="755.4" x2="718.8" y2="787.6"><stop offset="0" stop-color="#f0a92b"/><stop offset="0.5" stop-color="#fccb39"/><stop offset="0.8" stop-color="#fccb39"/><stop offset="1" stop-color="#f0a92b"/></linearGradient><linearGradient id="g30" gradientUnits="userSpaceOnUse" x1="665" y1="815" x2="699.6" y2="767.1"><stop offset="0" stop-color="#d9841a" stop-opacity="0.7"/><stop offset="1" stop-color="#d9841a" stop-opacity="0"/></linearGradient><linearGradient id="g31" gradientUnits="userSpaceOnUse" x1="703.1" y1="854.8" x2="784.9" y2="900.2"><stop offset="0" stop-color="#f0a92b"/><stop offset="0.5" stop-color="#fccd3a"/><stop offset="0.8" stop-color="#fccd3a"/><stop offset="1" stop-color="#f0a92b"/></linearGradient><linearGradient id="g32" gradientUnits="userSpaceOnUse" x1="690" y1="975" x2="749.4" y2="867.8"><stop offset="0" stop-color="#d9841a" stop-opacity="0.7"/><stop offset="1" stop-color="#d9841a" stop-opacity="0"/></linearGradient><linearGradient id="g33" gradientUnits="userSpaceOnUse" x1="635.1" y1="872.3" x2="713.9" y2="922.7"><stop offset="0" stop-color="#efa62a"/><stop offset="0.5" stop-color="#fccb39"/><stop offset="0.8" stop-color="#fccb39"/><stop offset="1" stop-color="#efa62a"/></linearGradient><linearGradient id="g34" gradientUnits="userSpaceOnUse" x1="625" y1="975" x2="679.5" y2="889.8"><stop offset="0" stop-color="#d9841a" stop-opacity="0.7"/><stop offset="1" stop-color="#d9841a" stop-opacity="0"/></linearGradient><linearGradient id="g35" gradientUnits="userSpaceOnUse" x1="401.1" y1="819.9" x2="538.9" y2="875.1"><stop offset="0" stop-color="#efa62a"/><stop offset="0.5" stop-color="#fccb39"/><stop offset="0.8" stop-color="#fccb39"/><stop offset="1" stop-color="#efa62a"/></linearGradient><linearGradient id="g36" gradientUnits="userSpaceOnUse" x1="425" y1="960" x2="474.5" y2="836.2"><stop offset="0" stop-color="#d9841a" stop-opacity="0.7"/><stop offset="1" stop-color="#d9841a" stop-opacity="0"/></linearGradient><linearGradient id="g37" gradientUnits="userSpaceOnUse" x1="263.5" y1="863.8" x2="411.5" y2="876.2"><stop offset="0" stop-color="#eda12a"/><stop offset="0.5" stop-color="#fac738"/><stop offset="0.8" stop-color="#fac738"/><stop offset="1" stop-color="#eda12a"/></linearGradient><linearGradient id="g38" gradientUnits="userSpaceOnUse" x1="330" y1="960" x2="338.2" y2="861"><stop offset="0" stop-color="#d9841a" stop-opacity="0.7"/><stop offset="1" stop-color="#d9841a" stop-opacity="0"/></linearGradient><linearGradient id="g39" gradientUnits="userSpaceOnUse" x1="562.6" y1="821.9" x2="687.4" y2="865.1"><stop offset="0" stop-color="#f0a92b"/><stop offset="0.5" stop-color="#fccb39"/><stop offset="0.8" stop-color="#fccb39"/><stop offset="1" stop-color="#f0a92b"/></linearGradient><linearGradient id="g40" gradientUnits="userSpaceOnUse" x1="595" y1="930" x2="628" y2="834.9"><stop offset="0" stop-color="#d9841a" stop-opacity="0.7"/><stop offset="1" stop-color="#d9841a" stop-opacity="0"/></linearGradient><linearGradient id="g41" gradientUnits="userSpaceOnUse" x1="121.8" y1="949" x2="248.2" y2="949"><stop offset="0" stop-color="#eb9d28"/><stop offset="0.5" stop-color="#fac537"/><stop offset="0.8" stop-color="#fac537"/><stop offset="1" stop-color="#eb9d28"/></linearGradient><linearGradient id="g42" gradientUnits="userSpaceOnUse" x1="185" y1="1030" x2="185" y2="940.9"><stop offset="0" stop-color="#d9841a" stop-opacity="0.7"/><stop offset="1" stop-color="#d9841a" stop-opacity="0"/></linearGradient><linearGradient id="g43" gradientUnits="userSpaceOnUse" x1="235.8" y1="957.4" x2="329.2" y2="954.6"><stop offset="0" stop-color="#ea9a27"/><stop offset="0.5" stop-color="#f9c336"/><stop offset="0.8" stop-color="#f9c336"/><stop offset="1" stop-color="#ea9a27"/></linearGradient><linearGradient id="g44" gradientUnits="userSpaceOnUse" x1="285" y1="1040" x2="282.2" y2="947.6"><stop offset="0" stop-color="#d9841a" stop-opacity="0.7"/><stop offset="1" stop-color="#d9841a" stop-opacity="0"/></linearGradient><linearGradient id="g45" gradientUnits="userSpaceOnUse" x1="559.4" y1="897.7" x2="688.6" y2="1000.3"><stop offset="0" stop-color="#f0a82b"/><stop offset="0.5" stop-color="#fccc3a"/><stop offset="0.8" stop-color="#fccc3a"/><stop offset="1" stop-color="#f0a82b"/></linearGradient><linearGradient id="g46" gradientUnits="userSpaceOnUse" x1="520" y1="1080" x2="634.4" y2="935.9"><stop offset="0" stop-color="#d9841a" stop-opacity="0.7"/><stop offset="1" stop-color="#d9841a" stop-opacity="0"/></linearGradient><linearGradient id="g47" gradientUnits="userSpaceOnUse" x1="446.9" y1="930.3" x2="583.1" y2="1041.7"><stop offset="0" stop-color="#eda22a"/><stop offset="0.5" stop-color="#fbc939"/><stop offset="0.8" stop-color="#fbc939"/><stop offset="1" stop-color="#eda22a"/></linearGradient><linearGradient id="g48" gradientUnits="userSpaceOnUse" x1="430" y1="1090" x2="523.5" y2="975.6"><stop offset="0" stop-color="#d9841a" stop-opacity="0.7"/><stop offset="1" stop-color="#d9841a" stop-opacity="0"/></linearGradient><linearGradient id="g49" gradientUnits="userSpaceOnUse" x1="302.6" y1="980.9" x2="417.4" y2="1019.1"><stop offset="0" stop-color="#e99827"/><stop offset="0.5" stop-color="#f9c336"/><stop offset="0.8" stop-color="#f9c336"/><stop offset="1" stop-color="#e99827"/></linearGradient><linearGradient id="g50" gradientUnits="userSpaceOnUse" x1="340" y1="1060" x2="362" y2="994"><stop offset="0" stop-color="#d9841a" stop-opacity="0.7"/><stop offset="1" stop-color="#d9841a" stop-opacity="0"/></linearGradient><radialGradient id="g51" gradientUnits="userSpaceOnUse" cx="130" cy="1010" r="640"><stop offset="0" stop-color="#e58a22" stop-opacity="0.2"/><stop offset="0.5" stop-color="#e8902a" stop-opacity="0.1"/><stop offset="1" stop-color="#e8902a" stop-opacity="0"/></radialGradient><filter id="b1.5" x="-40%" y="-40%" width="180%" height="180%"><feGaussianBlur stdDeviation="1.5"/></filter></defs>
<rect x="91" y="109" width="1519" height="893" fill="#0827a5"/>
<rect x="1180" y="600" width="430" height="402" fill="url(#g1)"/>
<path d="M85,100 L589.5,100 L589.8,109 L589.5,131 L604.5,109 L604.5,100 L842,100 C842,125 841,150 840,165 C838,195 832,220 825.5,243 C821,260 816,274 812.5,285 C816,289 820,289 824,290 C836,292 846,297 855,300.5 C864,292 872,281 880,273 C902,251 925,234 947,217 C969,201 990,186 1013,172 C1031,163 1050,160 1070,159 C1080,158.5 1088,158.5 1094,160 L1098,170 L1103,176 L1112,171 L1120,172 C1123,178 1124,183 1127,188 C1131,190 1135,193 1138,197 C1145,205 1150,222 1152,240 C1155,262 1154,290 1151,305 C1148,325 1143,340 1138,353 C1134,365 1131,373 1127.5,381 C1134,385 1139,389 1143,394 C1149,402 1151,410 1154,416 C1158,426 1164,434 1168,447 C1180,442 1190,440 1200,437 C1230,429 1265,419 1300,410 C1322,405 1340,403 1362,401 L1362,540 C1355,553 1350,562 1345,570 C1335,586 1322,598 1307,610 C1297,618 1288,624 1282,631 C1279,640 1278,648 1276,658 C1274,670 1272,680 1268,690 C1262,705 1254,714 1247,724 C1240,735 1233,745 1227,754 C1220,765 1213,775 1206,784 C1199,794 1192,801 1184,809 C1200,802 1216,797 1233,792 C1250,787 1266,782 1283,777 C1300,772 1316,767 1333,763 C1350,759 1366,757 1383,754.5 C1396,752 1410,750.5 1423,750 C1438,749.5 1452,749.5 1467,751 C1479,752 1490,754 1500,757 C1510,760 1519,763 1527,768 C1534,772 1539,777 1544,783 C1548,787 1552,790 1558,797 C1562,805 1563,814 1563,823 C1564,835 1563,846 1560,857 C1557,870 1553,882 1547,893 C1541,903 1535,912 1527,920 C1520,927 1512,934 1504,943 C1515,952 1526,964 1534,975 C1541,984 1546,992 1547,1010 L85,1010 Z" fill="none" stroke="#f5f0e2" stroke-width="6" stroke-linejoin="round"/>
<g clip-path="url(#fc)">
<rect x="85" y="100" width="1530" height="910" fill="url(#g2)"/>
<path d="M85,100C214.2,23.3 730.8,66.7 860,100C989.2,133.3 886.7,246.7 860,300C833.3,353.3 750,376.7 700,420C650,463.3 610,530 560,560C510,590 479.2,600 400,600C320.8,600 137.5,643.3 85,560C32.5,476.7 -44.2,176.7 85,100Z" fill="#eeb223" filter="url(#b20)"/>
<path d="M85,560C120.8,485 234.2,553.3 300,560C365.8,566.7 426.7,580 480,600C533.3,620 583.3,646.7 620,680C656.7,713.3 683.3,745 700,800C716.7,855 822.5,975 720,1010C617.5,1045 190.8,1085 85,1010C-20.8,935 49.2,635 85,560Z" fill="#ea9824" filter="url(#b30)"/>
<path d="M900,300C965,216.7 1105,175 1150,200C1195,225 1134.7,416.7 1170,450C1205.3,483.3 1330,381.7 1362,400C1394,418.3 1375.7,510 1362,560C1348.3,610 1307,660 1280,700C1253,740 1153.3,790 1200,800C1246.7,810 1500,725 1560,760C1620,795 1686.7,968.3 1560,1010C1433.3,1051.7 933.3,1061.7 800,1010C666.7,958.3 743.3,818.3 760,700C776.7,581.7 835,383.3 900,300Z" fill="#fbd036" filter="url(#b30)"/>
<path d="M80,95C93.8,9.2 144.7,83.3 163,95C181.3,106.7 182.7,146.2 190,165C197.3,183.8 201.5,190.8 207,208C212.5,225.2 218,245.8 223,268C228,290.2 233.7,317.7 237,341C240.3,364.3 241.5,388.2 243,408C244.5,427.8 244.8,441.3 246,460C247.2,478.7 248.8,496.7 250,520C251.2,543.3 281.3,585 253,600C224.7,615 108.8,694.2 80,610C51.2,525.8 66.2,180.8 80,95Z" fill="url(#g3)" filter="url(#b1)"/>
<path d="M85,420L125,450L120,600L85,600Z" fill="#eea428" filter="url(#b14)" opacity="0.4"/>
<path d="M150,110C160.8,125 174.2,163.3 185,200C195.8,236.7 207.8,288.3 215,330C222.2,371.7 229.7,430 228,450C226.3,470 213,470 205,450C197,430 190.8,371.7 180,330C169.2,288.3 150,236.7 140,200C130,163.3 118.3,125 120,110C121.7,95 139.2,95 150,110Z" fill="#fedb45" filter="url(#b12)" opacity="0.3"/>
<path d="M323,95C295,108.3 309.7,150.7 303,175C296.3,199.3 289,218.8 283,241C277,263.2 272,285.7 267,308C262,330.3 256.3,352.8 253,375C249.7,397.2 248,416.8 247,441C246,465.2 245.3,491.8 247,520C248.7,548.2 232.3,595 257,610C281.7,625 369,625 395,610C421,595 408.3,546.5 413,520C417.7,493.5 420.2,469.7 423,451C425.8,432.3 426.7,426.3 430,408C433.3,389.7 438.5,363.2 443,341C447.5,318.8 453,297.2 457,275C461,252.8 464.7,238 467,208C469.3,178 495,113.8 471,95C447,76.2 351,81.7 323,95Z" fill="url(#g4)" filter="url(#b1)"/>
<path d="M290,230C302.3,220 330.8,218.3 340,250C349.2,281.7 346.7,360 345,420C343.3,480 345.8,578.3 330,610C314.2,641.7 263.7,638.2 250,610C236.3,581.8 245.3,491 248,441C250.7,391 259,345.2 266,310C273,274.8 277.7,240 290,230Z" fill="#ee9f24" filter="url(#b12)" opacity="0.5"/>
<path d="M400,110C409.2,85 446.7,85 455,110C463.3,135 455,211.7 450,260C445,308.3 434.2,365 425,400C415.8,435 401.7,470 395,470C388.3,470 384.2,435 385,400C385.8,365 397.5,308.3 400,260C402.5,211.7 390.8,135 400,110Z" fill="#fedc46" filter="url(#b14)" opacity="0.4"/>
<path d="M470,300C485,299.8 527.2,314.8 535,340C542.8,365.2 525.3,414.3 517,451C508.7,487.7 504.5,531.8 485,560C465.5,588.2 410.8,638.2 400,620C389.2,601.8 412.5,497.5 420,451C427.5,404.5 436.7,366.2 445,341C453.3,315.8 455,300.2 470,300Z" fill="#eba321" filter="url(#b10)" opacity="0.6"/>
<path d="M604,95C646.5,90.8 805.3,83.3 845,95C884.7,106.7 843.8,144.2 842,165C840.2,185.8 838.5,200 834,220C829.5,240 825.7,269.7 815,285C804.3,300.3 788.2,299.5 770,312C751.8,324.5 727.8,339.3 706,360C684.2,380.7 658.3,411.5 639,436C619.7,460.5 604.8,483 590,507C575.2,531 561.7,556.2 550,580C538.3,603.8 533.3,640 520,650C506.7,660 476.2,659.5 470,640C463.8,620.5 475.2,564.5 483,533C490.8,501.5 508.7,483 517,451C525.3,419 526.3,376 533,341C539.7,306 548.7,274.3 557,241C565.3,207.7 577.5,161.2 583,141C588.5,120.8 586.5,127.7 590,120C593.5,112.3 561.5,99.2 604,95Z" fill="url(#g5)" filter="url(#b1)"/>
<path d="M745,120C756.7,98.3 771.7,106.7 770,130C768.3,153.3 748.3,218.3 735,260C721.7,301.7 702.5,356.7 690,380C677.5,403.3 658.3,420 660,400C661.7,380 685.8,306.7 700,260C714.2,213.3 733.3,141.7 745,120Z" fill="#eeb425" filter="url(#b8)" opacity="0.6"/>
<path d="M800,105C807.2,89.2 833.3,85.8 838,105C842.7,124.2 833.3,190.8 828,220C822.7,249.2 814,268.3 806,280C798,291.7 781.8,303.3 780,290C778.2,276.7 791.7,230.8 795,200C798.3,169.2 792.8,120.8 800,105Z" fill="#fdd83e" filter="url(#b8)" opacity="0.8"/>
<path d="M610,110C624.2,85 658.3,85 660,110C661.7,135 636.7,208.3 620,260C603.3,311.7 574.2,391.7 560,420C545.8,448.3 532.5,456.7 535,430C537.5,403.3 562.5,313.3 575,260C587.5,206.7 595.8,135 610,110Z" fill="#f9cc33" filter="url(#b10)" opacity="0.6"/>
<path d="M850,295C856.7,278.3 880,290.8 890,300C900,309.2 907.5,330 910,350C912.5,370 909.2,395 905,420C900.8,445 893.3,473.3 885,500C876.7,526.7 865.8,553.3 855,580C844.2,606.7 832.5,636.7 820,660C807.5,683.3 790,716.7 780,720C770,723.3 756.7,700 760,680C763.3,660 787.5,630.5 800,600C812.5,569.5 826.7,530.3 835,497C843.3,463.7 847.5,433.7 850,400C852.5,366.3 843.3,311.7 850,295Z" fill="#ecb024" filter="url(#b6)"/>
<path d="M836,289C844.3,290 851.3,287.7 855,300C858.7,312.3 859.2,341.3 858,363C856.8,384.7 852,407.7 848,430C844,452.3 839.7,474.8 834,497C828.3,519.2 820.2,542 814,563C807.8,584 805.2,600.2 797,623C788.8,645.8 777.8,677.2 765,700C752.2,722.8 754.2,750 720,760C685.8,770 594.2,770 560,760C525.8,750 520.5,720 515,700C509.5,680 521.2,660 527,640C532.8,620 539.5,602.2 550,580C560.5,557.8 575.2,531 590,507C604.8,483 619.7,460.5 639,436C658.3,411.5 683.7,381 706,360C728.3,339 756.5,321 773,310C789.5,299 794.5,297.5 805,294C815.5,290.5 827.7,288 836,289Z" fill="url(#g6)" filter="url(#b1)"/>
<path d="M800,330C811.7,305 835,310 840,330C845,350 838.3,411.7 830,450C821.7,488.3 805,528.3 790,560C775,591.7 751.7,633.3 740,640C728.3,646.7 715,626.7 720,600C725,573.3 756.7,525 770,480C783.3,435 788.3,355 800,330Z" fill="#fedd48" filter="url(#b10)" opacity="0.6"/>
<path d="M1143,392C1135.8,388.7 1113.8,385 1100,385C1086.2,385 1076.7,387.8 1060,392C1043.3,396.2 1021.2,401.2 1000,410C978.8,418.8 955.2,430.8 933,445C910.8,459.2 886.3,478.3 867,495C847.7,511.7 830.3,529.2 817,545C803.7,560.8 792,574.2 787,590C782,605.8 782,640.8 787,640C792,639.2 803.7,603.3 817,585C830.3,566.7 847.7,548 867,530C886.3,512 910.8,492 933,477C955.2,462 977.7,450.3 1000,440C1022.3,429.7 1043.2,420.8 1067,415C1090.8,409.2 1130.3,408.8 1143,405C1155.7,401.2 1150.2,395.3 1143,392Z" fill="#e6aa21" filter="url(#b5)" opacity="0.9"/>
<path d="M1143,397C1151,399.8 1149.2,407 1153,415C1156.8,423 1164.3,433.3 1166,445C1167.7,456.7 1166,469.2 1163,485C1160,500.8 1154.3,519.2 1148,540C1141.7,560.8 1134.7,585 1125,610C1115.3,635 1104.2,663.3 1090,690C1075.8,716.7 1061.7,743.3 1040,770C1018.3,796.7 990,828.3 960,850C930,871.7 903.3,891.7 860,900C816.7,908.3 721.7,923.3 700,900C678.3,876.7 720,796.7 730,760C740,723.3 750.5,702.8 760,680C769.5,657.2 777.5,640.8 787,623C796.5,605.2 803.7,590.2 817,573C830.3,555.8 847.7,537.7 867,520C886.3,502.3 910.8,482 933,467C955.2,452 977.7,440 1000,430C1022.3,420 1049.5,412.3 1067,407C1084.5,401.7 1092.3,399.7 1105,398C1117.7,396.3 1135,394.2 1143,397Z" fill="url(#g7)" filter="url(#b1)"/>
<path d="M960,240C973.3,222.5 1003.3,200 1000,215C996.7,230 956.7,299.2 940,330C923.3,360.8 910,390 900,400C890,410 876.7,403.3 880,390C883.3,376.7 906.7,345 920,320C933.3,295 946.7,257.5 960,240Z" fill="#f3c12a" filter="url(#b6)" opacity="0.7"/>
<path d="M1090,200C1095.8,185 1120,193.3 1125,210C1130,226.7 1125.8,271.7 1120,300C1114.2,328.3 1100,366.7 1090,380C1080,393.3 1060,393.3 1060,380C1060,366.7 1085,330 1090,300C1095,270 1084.2,215 1090,200Z" fill="#fedc48" filter="url(#b8)" opacity="0.6"/>
<path d="M1168,450C1179.7,436.7 1208,443.3 1230,440C1252,436.7 1278,431.7 1300,430C1322,428.3 1351.7,415 1362,430C1372.3,445 1372.3,508.3 1362,520C1351.7,531.7 1320.3,505 1300,500C1279.7,495 1258.3,490 1240,490C1221.7,490 1203.3,495 1190,500C1176.7,505 1163.7,528.3 1160,520C1156.3,511.7 1156.3,463.3 1168,450Z" fill="#e9b421" filter="url(#b10)" opacity="0.8"/>
<path d="M1160,520C1168.7,512.5 1185.8,502 1200,500C1214.2,498 1233.7,501.3 1245,508C1256.3,514.7 1265.2,524.7 1268,540C1270.8,555.3 1266.7,580 1262,600C1257.3,620 1250.3,640 1240,660C1229.7,680 1216.7,703.3 1200,720C1183.3,736.7 1158.3,763.3 1140,760C1121.7,756.7 1092.5,725 1090,700C1087.5,675 1115.3,635.8 1125,610C1134.7,584.2 1142.2,560 1148,545C1153.8,530 1151.3,527.5 1160,520Z" fill="#fdd53b" filter="url(#b3)"/>
<path d="M1268,545C1272.7,531.7 1284.3,527.5 1300,520C1315.7,512.5 1351.7,495 1362,500C1372.3,505 1367.3,535 1362,550C1356.7,565 1342.8,577 1330,590C1317.2,603 1294.7,626.3 1285,628C1275.3,629.7 1274.8,613.8 1272,600C1269.2,586.2 1263.3,558.3 1268,545Z" fill="#f7c42f" filter="url(#b5)"/>
<path d="M700,820C713.3,796.7 766.7,777.5 800,760C833.3,742.5 866.7,726.7 900,715C933.3,703.3 966.7,702.5 1000,690C1033.3,677.5 1070,655 1100,640C1130,625 1156.7,600 1180,600C1203.3,600 1250,623.3 1240,640C1230,656.7 1160,682.5 1120,700C1080,717.5 1036.7,730 1000,745C963.3,760 933.3,772.5 900,790C866.7,807.5 830,831.7 800,850C770,868.3 736.7,905 720,900C703.3,895 686.7,843.3 700,820Z" fill="#efb128" filter="url(#b10)" opacity="0.8"/>
<path d="M650,960C660,944.2 721.7,921.7 760,905C798.3,888.3 840,873.8 880,860C920,846.2 963.3,832.8 1000,822C1036.7,811.2 1069.2,800.3 1100,795C1130.8,789.7 1170,786.7 1185,790C1200,793.3 1204.2,810 1190,815C1175.8,820 1131.7,814.2 1100,820C1068.3,825.8 1036.7,837.5 1000,850C963.3,862.5 916.7,879.2 880,895C843.3,910.8 810,927.5 780,945C750,962.5 721.7,997.5 700,1000C678.3,1002.5 640,975.8 650,960Z" fill="#eaa923" filter="url(#b7)" opacity="0.8"/>
<path d="M1185,808C1207.2,804.7 1208.3,799.5 1233,792C1257.7,784.5 1301.3,770 1333,763C1364.7,756 1395.2,751 1423,750C1450.8,749 1479.7,751.5 1500,757C1520.3,762.5 1534.2,772 1545,783C1555.8,794 1562.5,810.2 1565,823C1567.5,835.8 1564.2,846.3 1560,860C1555.8,873.7 1549.7,891.7 1540,905C1530.3,918.3 1500.3,922.5 1502,940C1503.7,957.5 1697,998.3 1550,1010C1403,1021.7 761.7,1018.3 620,1010C478.3,1001.7 670,975.8 700,960C730,944.2 766.7,929.7 800,915C833.3,900.3 866.7,884.8 900,872C933.3,859.2 966.7,848 1000,838C1033.3,828 1069.2,817 1100,812C1130.8,807 1162.8,811.3 1185,808Z" fill="url(#g8)" filter="url(#b1)"/>
<path d="M1000,900C1025,881.7 1100,860 1150,850C1200,840 1258.3,836.7 1300,840C1341.7,843.3 1400,860 1400,870C1400,880 1341.7,890 1300,900C1258.3,910 1200,920 1150,930C1100,940 1025,965 1000,960C975,955 975,918.3 1000,900Z" fill="#f5bd2c" filter="url(#b14)" opacity="0.6"/>
<path d="M820,1000C831.7,988.3 903.3,956.7 950,940C996.7,923.3 1075,901.7 1100,900C1125,898.3 1123.3,917.5 1100,930C1076.7,942.5 996.7,961.7 960,975C923.3,988.3 903.3,1005.8 880,1010C856.7,1014.2 808.3,1011.7 820,1000Z" fill="#efaf28" filter="url(#b8)" opacity="0.6"/>
<path d="M312.7,796.1C296.9,783.9 296.2,754.8 292.5,730.6C288.7,706.5 287,677.3 290.3,651.3C293.5,625.3 304.3,595.8 311.9,574.5C319.6,553.1 328.3,536.4 336.2,523.2C344.1,510.1 351.7,501.6 359.5,495.6C367.3,489.6 375.5,486.2 383,487C390.5,487.8 397.9,492.8 404.2,500.3C410.6,507.8 416.2,517.7 421.2,532.2C426.2,546.7 431.2,564.9 434.3,587.3C437.3,609.8 441.7,640.9 439.4,667C437.2,693.1 429.4,721.3 420.7,744.2C412.1,767 405.3,795.3 387.3,803.9C369.3,812.6 328.5,808.3 312.7,796.1Z" fill="#d9841a" filter="url(#b7)" opacity="0.8" transform="translate(5,3)"/>
<path d="M312.7,796.1C296.9,783.9 296.2,754.8 292.5,730.6C288.7,706.5 287,677.3 290.3,651.3C293.5,625.3 304.3,595.8 311.9,574.5C319.6,553.1 328.3,536.4 336.2,523.2C344.1,510.1 351.7,501.6 359.5,495.6C367.3,489.6 375.5,486.2 383,487C390.5,487.8 397.9,492.8 404.2,500.3C410.6,507.8 416.2,517.7 421.2,532.2C426.2,546.7 431.2,564.9 434.3,587.3C437.3,609.8 441.7,640.9 439.4,667C437.2,693.1 429.4,721.3 420.7,744.2C412.1,767 405.3,795.3 387.3,803.9C369.3,812.6 328.5,808.3 312.7,796.1Z" fill="url(#g9)" filter="url(#b1)"/>
<path d="M312.7,796.1C296.9,783.9 296.2,754.8 292.5,730.6C288.7,706.5 287,677.3 290.3,651.3C293.5,625.3 304.3,595.8 311.9,574.5C319.6,553.1 328.3,536.4 336.2,523.2C344.1,510.1 351.7,501.6 359.5,495.6C367.3,489.6 375.5,486.2 383,487C390.5,487.8 397.9,492.8 404.2,500.3C410.6,507.8 416.2,517.7 421.2,532.2C426.2,546.7 431.2,564.9 434.3,587.3C437.3,609.8 441.7,640.9 439.4,667C437.2,693.1 429.4,721.3 420.7,744.2C412.1,767 405.3,795.3 387.3,803.9C369.3,812.6 328.5,808.3 312.7,796.1Z" fill="url(#g10)" filter="url(#b1)"/>
<path d="M435.2,757C427.4,748.4 428.4,727.9 427.6,710.9C426.8,693.9 427.3,673.4 430.3,655.1C433.3,636.8 440.5,616.1 445.7,601.1C450.8,586.2 456.3,574.4 461.2,565.2C466,556 470.5,550.1 475,545.9C479.5,541.7 484,539.4 488,540C492,540.6 495.7,544.1 498.7,549.5C501.8,554.8 504.3,561.8 506.3,572C508.2,582.2 510,595 510.5,610.9C511.1,626.7 511.9,648.6 509.4,666.9C506.9,685.3 501.4,705.1 495.6,721.1C489.8,737.1 484.8,757 474.8,763C464.7,769 443.1,765.7 435.2,757Z" fill="#d9841a" filter="url(#b7)" opacity="0.8" transform="translate(5,3)"/>
<path d="M435.2,757C427.4,748.4 428.4,727.9 427.6,710.9C426.8,693.9 427.3,673.4 430.3,655.1C433.3,636.8 440.5,616.1 445.7,601.1C450.8,586.2 456.3,574.4 461.2,565.2C466,556 470.5,550.1 475,545.9C479.5,541.7 484,539.4 488,540C492,540.6 495.7,544.1 498.7,549.5C501.8,554.8 504.3,561.8 506.3,572C508.2,582.2 510,595 510.5,610.9C511.1,626.7 511.9,648.6 509.4,666.9C506.9,685.3 501.4,705.1 495.6,721.1C489.8,737.1 484.8,757 474.8,763C464.7,769 443.1,765.7 435.2,757Z" fill="url(#g11)" filter="url(#b1)"/>
<path d="M435.2,757C427.4,748.4 428.4,727.9 427.6,710.9C426.8,693.9 427.3,673.4 430.3,655.1C433.3,636.8 440.5,616.1 445.7,601.1C450.8,586.2 456.3,574.4 461.2,565.2C466,556 470.5,550.1 475,545.9C479.5,541.7 484,539.4 488,540C492,540.6 495.7,544.1 498.7,549.5C501.8,554.8 504.3,561.8 506.3,572C508.2,582.2 510,595 510.5,610.9C511.1,626.7 511.9,648.6 509.4,666.9C506.9,685.3 501.4,705.1 495.6,721.1C489.8,737.1 484.8,757 474.8,763C464.7,769 443.1,765.7 435.2,757Z" fill="url(#g12)" filter="url(#b1)"/>
<path d="M195,759.2C186.2,752 185,732.9 182.2,717.3C179.5,701.6 177.7,682.5 178.6,665.3C179.6,648.1 184.4,628.2 187.8,613.8C191.2,599.5 195.4,588 199.2,579C203,570 206.8,564.1 210.7,559.8C214.7,555.4 219,552.8 223,553C227,553.2 231.1,556.1 234.7,560.7C238.3,565.3 241.6,571.5 244.7,580.8C247.9,590.1 251.1,601.8 253.4,616.4C255.7,631 259,651.1 258.6,668.4C258.2,685.7 254.9,704.5 251,719.9C247,735.3 244.3,754.2 235,760.8C225.7,767.3 203.8,766.5 195,759.2Z" fill="#d9841a" filter="url(#b7)" opacity="0.8" transform="translate(5,3)"/>
<path d="M195,759.2C186.2,752 185,732.9 182.2,717.3C179.5,701.6 177.7,682.5 178.6,665.3C179.6,648.1 184.4,628.2 187.8,613.8C191.2,599.5 195.4,588 199.2,579C203,570 206.8,564.1 210.7,559.8C214.7,555.4 219,552.8 223,553C227,553.2 231.1,556.1 234.7,560.7C238.3,565.3 241.6,571.5 244.7,580.8C247.9,590.1 251.1,601.8 253.4,616.4C255.7,631 259,651.1 258.6,668.4C258.2,685.7 254.9,704.5 251,719.9C247,735.3 244.3,754.2 235,760.8C225.7,767.3 203.8,766.5 195,759.2Z" fill="url(#g13)" filter="url(#b1)"/>
<path d="M195,759.2C186.2,752 185,732.9 182.2,717.3C179.5,701.6 177.7,682.5 178.6,665.3C179.6,648.1 184.4,628.2 187.8,613.8C191.2,599.5 195.4,588 199.2,579C203,570 206.8,564.1 210.7,559.8C214.7,555.4 219,552.8 223,553C227,553.2 231.1,556.1 234.7,560.7C238.3,565.3 241.6,571.5 244.7,580.8C247.9,590.1 251.1,601.8 253.4,616.4C255.7,631 259,651.1 258.6,668.4C258.2,685.7 254.9,704.5 251,719.9C247,735.3 244.3,754.2 235,760.8C225.7,767.3 203.8,766.5 195,759.2Z" fill="url(#g14)" filter="url(#b1)"/>
<path d="M90.1,822.6C75.9,816.1 71.1,795.3 64.6,778.5C58.1,761.7 52.5,740.9 51.2,721.7C50,702.5 54.1,679.7 57,663.3C59.9,646.8 64.2,633.5 68.5,622.9C72.8,612.3 77.5,605.1 82.8,599.6C88,594.1 94,590.5 100,590C106,589.5 112.5,592 118.6,596.5C124.7,601 130.6,607.2 136.7,616.9C142.7,626.6 149.3,639 155,654.7C160.7,670.5 168.7,692.2 170.8,711.3C172.8,730.4 170.9,751.8 167.4,769.5C163.9,787.2 162.8,808.6 149.9,817.4C137,826.2 104.3,829.1 90.1,822.6Z" fill="#d9841a" filter="url(#b7)" opacity="0.8" transform="translate(5,3)"/>
<path d="M90.1,822.6C75.9,816.1 71.1,795.3 64.6,778.5C58.1,761.7 52.5,740.9 51.2,721.7C50,702.5 54.1,679.7 57,663.3C59.9,646.8 64.2,633.5 68.5,622.9C72.8,612.3 77.5,605.1 82.8,599.6C88,594.1 94,590.5 100,590C106,589.5 112.5,592 118.6,596.5C124.7,601 130.6,607.2 136.7,616.9C142.7,626.6 149.3,639 155,654.7C160.7,670.5 168.7,692.2 170.8,711.3C172.8,730.4 170.9,751.8 167.4,769.5C163.9,787.2 162.8,808.6 149.9,817.4C137,826.2 104.3,829.1 90.1,822.6Z" fill="url(#g15)" filter="url(#b1)"/>
<path d="M90.1,822.6C75.9,816.1 71.1,795.3 64.6,778.5C58.1,761.7 52.5,740.9 51.2,721.7C50,702.5 54.1,679.7 57,663.3C59.9,646.8 64.2,633.5 68.5,622.9C72.8,612.3 77.5,605.1 82.8,599.6C88,594.1 94,590.5 100,590C106,589.5 112.5,592 118.6,596.5C124.7,601 130.6,607.2 136.7,616.9C142.7,626.6 149.3,639 155,654.7C160.7,670.5 168.7,692.2 170.8,711.3C172.8,730.4 170.9,751.8 167.4,769.5C163.9,787.2 162.8,808.6 149.9,817.4C137,826.2 104.3,829.1 90.1,822.6Z" fill="url(#g16)" filter="url(#b1)"/>
<path d="M154.6,791.7C147,787 143.8,772.1 139.9,760.1C136,748.1 132.4,733.3 131.1,719.6C129.8,705.9 131.2,689.7 132.1,678C133.1,666.3 134.9,656.8 136.8,649.2C138.7,641.7 140.8,636.6 143.4,632.8C145.9,628.9 148.9,626.3 152,626C155.1,625.7 158.6,627.5 161.9,630.7C165.2,634 168.4,638.4 171.9,645.4C175.4,652.3 179.2,661.2 182.7,672.4C186.1,683.7 191,699.2 192.7,712.8C194.4,726.5 194.1,741.7 192.9,754.3C191.7,766.9 191.8,782.1 185.4,788.3C179,794.5 162.2,796.4 154.6,791.7Z" fill="#d9841a" filter="url(#b7)" opacity="0.8" transform="translate(5,3)"/>
<path d="M154.6,791.7C147,787 143.8,772.1 139.9,760.1C136,748.1 132.4,733.3 131.1,719.6C129.8,705.9 131.2,689.7 132.1,678C133.1,666.3 134.9,656.8 136.8,649.2C138.7,641.7 140.8,636.6 143.4,632.8C145.9,628.9 148.9,626.3 152,626C155.1,625.7 158.6,627.5 161.9,630.7C165.2,634 168.4,638.4 171.9,645.4C175.4,652.3 179.2,661.2 182.7,672.4C186.1,683.7 191,699.2 192.7,712.8C194.4,726.5 194.1,741.7 192.9,754.3C191.7,766.9 191.8,782.1 185.4,788.3C179,794.5 162.2,796.4 154.6,791.7Z" fill="url(#g17)" filter="url(#b1)"/>
<path d="M154.6,791.7C147,787 143.8,772.1 139.9,760.1C136,748.1 132.4,733.3 131.1,719.6C129.8,705.9 131.2,689.7 132.1,678C133.1,666.3 134.9,656.8 136.8,649.2C138.7,641.7 140.8,636.6 143.4,632.8C145.9,628.9 148.9,626.3 152,626C155.1,625.7 158.6,627.5 161.9,630.7C165.2,634 168.4,638.4 171.9,645.4C175.4,652.3 179.2,661.2 182.7,672.4C186.1,683.7 191,699.2 192.7,712.8C194.4,726.5 194.1,741.7 192.9,754.3C191.7,766.9 191.8,782.1 185.4,788.3C179,794.5 162.2,796.4 154.6,791.7Z" fill="url(#g18)" filter="url(#b1)"/>
<path d="M428.4,829.1C418.9,817.9 423.3,799.6 424.7,783.8C426,767.9 429.7,749.4 436.5,734C443.3,718.5 456.1,702.7 465.3,691.1C474.5,679.6 483.7,671.2 491.7,664.8C499.7,658.5 506.6,654.9 513.4,653C520.1,651 526.7,650.8 532,653C537.3,655.2 541.9,660 545.3,666.1C548.6,672.2 551.1,679.6 552.3,689.8C553.5,699.9 554.1,712.4 552.5,727.1C550.9,741.7 548.9,762 542.8,777.7C536.8,793.5 526.3,809.2 516.1,821.4C505.9,833.6 496.2,849.7 481.6,850.9C467,852.2 437.9,840.2 428.4,829.1Z" fill="#d9841a" filter="url(#b7)" opacity="0.8" transform="translate(5,3)"/>
<path d="M428.4,829.1C418.9,817.9 423.3,799.6 424.7,783.8C426,767.9 429.7,749.4 436.5,734C443.3,718.5 456.1,702.7 465.3,691.1C474.5,679.6 483.7,671.2 491.7,664.8C499.7,658.5 506.6,654.9 513.4,653C520.1,651 526.7,650.8 532,653C537.3,655.2 541.9,660 545.3,666.1C548.6,672.2 551.1,679.6 552.3,689.8C553.5,699.9 554.1,712.4 552.5,727.1C550.9,741.7 548.9,762 542.8,777.7C536.8,793.5 526.3,809.2 516.1,821.4C505.9,833.6 496.2,849.7 481.6,850.9C467,852.2 437.9,840.2 428.4,829.1Z" fill="url(#g19)" filter="url(#b1)"/>
<path d="M428.4,829.1C418.9,817.9 423.3,799.6 424.7,783.8C426,767.9 429.7,749.4 436.5,734C443.3,718.5 456.1,702.7 465.3,691.1C474.5,679.6 483.7,671.2 491.7,664.8C499.7,658.5 506.6,654.9 513.4,653C520.1,651 526.7,650.8 532,653C537.3,655.2 541.9,660 545.3,666.1C548.6,672.2 551.1,679.6 552.3,689.8C553.5,699.9 554.1,712.4 552.5,727.1C550.9,741.7 548.9,762 542.8,777.7C536.8,793.5 526.3,809.2 516.1,821.4C505.9,833.6 496.2,849.7 481.6,850.9C467,852.2 437.9,840.2 428.4,829.1Z" fill="url(#g20)" filter="url(#b1)"/>
<path d="M536.3,818.7C528.4,807.6 533.8,790.2 536.3,774.9C538.7,759.7 543.5,742 550.9,727.3C558.3,712.6 571.3,697.7 580.7,686.8C590,676 599.1,668.1 606.9,662.2C614.8,656.3 621.5,653.2 627.8,651.4C634.2,649.7 640.3,649.7 645,652C649.7,654.3 653.6,659 656.2,665C658.9,671 660.6,678.2 661,688C661.3,697.9 660.9,709.9 658.3,724C655.8,738 652.4,757.5 645.6,772.5C638.9,787.5 628.1,802.4 617.7,813.9C607.4,825.3 597.3,840.5 583.7,841.3C570.1,842.1 544.2,829.7 536.3,818.7Z" fill="#d9841a" filter="url(#b7)" opacity="0.8" transform="translate(5,3)"/>
<path d="M536.3,818.7C528.4,807.6 533.8,790.2 536.3,774.9C538.7,759.7 543.5,742 550.9,727.3C558.3,712.6 571.3,697.7 580.7,686.8C590,676 599.1,668.1 606.9,662.2C614.8,656.3 621.5,653.2 627.8,651.4C634.2,649.7 640.3,649.7 645,652C649.7,654.3 653.6,659 656.2,665C658.9,671 660.6,678.2 661,688C661.3,697.9 660.9,709.9 658.3,724C655.8,738 652.4,757.5 645.6,772.5C638.9,787.5 628.1,802.4 617.7,813.9C607.4,825.3 597.3,840.5 583.7,841.3C570.1,842.1 544.2,829.7 536.3,818.7Z" fill="url(#g21)" filter="url(#b1)"/>
<path d="M536.3,818.7C528.4,807.6 533.8,790.2 536.3,774.9C538.7,759.7 543.5,742 550.9,727.3C558.3,712.6 571.3,697.7 580.7,686.8C590,676 599.1,668.1 606.9,662.2C614.8,656.3 621.5,653.2 627.8,651.4C634.2,649.7 640.3,649.7 645,652C649.7,654.3 653.6,659 656.2,665C658.9,671 660.6,678.2 661,688C661.3,697.9 660.9,709.9 658.3,724C655.8,738 652.4,757.5 645.6,772.5C638.9,787.5 628.1,802.4 617.7,813.9C607.4,825.3 597.3,840.5 583.7,841.3C570.1,842.1 544.2,829.7 536.3,818.7Z" fill="url(#g22)" filter="url(#b1)"/>
<path d="M266.3,900.3C250.9,892 247.3,868.8 241.6,849.9C235.8,830.9 231.3,807.8 231.6,786.7C231.9,765.6 238.6,741.1 243.3,723.3C247.9,705.6 254,691.4 259.8,680.2C265.5,669 271.5,661.5 277.8,656C284.2,650.5 291.3,647.1 298,647C304.7,646.9 311.9,650.3 318.3,655.7C324.8,661.1 330.8,668.5 336.7,679.6C342.7,690.7 349,704.8 353.9,722.5C358.9,740.1 366,764.5 366.6,785.6C367.2,806.7 363.1,829.9 357.6,848.9C352.2,868 349,891.2 333.7,899.7C318.5,908.3 281.6,908.6 266.3,900.3Z" fill="#d9841a" filter="url(#b7)" opacity="0.8" transform="translate(5,3)"/>
<path d="M266.3,900.3C250.9,892 247.3,868.8 241.6,849.9C235.8,830.9 231.3,807.8 231.6,786.7C231.9,765.6 238.6,741.1 243.3,723.3C247.9,705.6 254,691.4 259.8,680.2C265.5,669 271.5,661.5 277.8,656C284.2,650.5 291.3,647.1 298,647C304.7,646.9 311.9,650.3 318.3,655.7C324.8,661.1 330.8,668.5 336.7,679.6C342.7,690.7 349,704.8 353.9,722.5C358.9,740.1 366,764.5 366.6,785.6C367.2,806.7 363.1,829.9 357.6,848.9C352.2,868 349,891.2 333.7,899.7C318.5,908.3 281.6,908.6 266.3,900.3Z" fill="url(#g23)" filter="url(#b1)"/>
<path d="M266.3,900.3C250.9,892 247.3,868.8 241.6,849.9C235.8,830.9 231.3,807.8 231.6,786.7C231.9,765.6 238.6,741.1 243.3,723.3C247.9,705.6 254,691.4 259.8,680.2C265.5,669 271.5,661.5 277.8,656C284.2,650.5 291.3,647.1 298,647C304.7,646.9 311.9,650.3 318.3,655.7C324.8,661.1 330.8,668.5 336.7,679.6C342.7,690.7 349,704.8 353.9,722.5C358.9,740.1 366,764.5 366.6,785.6C367.2,806.7 363.1,829.9 357.6,848.9C352.2,868 349,891.2 333.7,899.7C318.5,908.3 281.6,908.6 266.3,900.3Z" fill="url(#g24)" filter="url(#b1)"/>
<path d="M182.5,898.7C172.7,892.3 171.4,876.1 168.4,862.8C165.4,849.5 163.4,833.2 164.6,818.7C165.7,804.1 171.2,787.5 175.2,775.4C179.1,763.3 183.8,753.8 188.1,746.3C192.4,738.8 196.7,733.9 201.2,730.4C205.7,726.8 210.5,724.7 215,725C219.5,725.3 224.1,727.9 228.1,731.9C232.2,735.9 235.9,741.3 239.3,749.2C242.8,757.2 246.3,767.2 248.8,779.6C251.4,792 255,809.2 254.4,823.8C253.9,838.4 250.1,854.3 245.6,867.2C241.1,880.1 238,896 227.5,901.3C216.9,906.5 192.4,905.1 182.5,898.7Z" fill="#d9841a" filter="url(#b7)" opacity="0.8" transform="translate(5,3)"/>
<path d="M182.5,898.7C172.7,892.3 171.4,876.1 168.4,862.8C165.4,849.5 163.4,833.2 164.6,818.7C165.7,804.1 171.2,787.5 175.2,775.4C179.1,763.3 183.8,753.8 188.1,746.3C192.4,738.8 196.7,733.9 201.2,730.4C205.7,726.8 210.5,724.7 215,725C219.5,725.3 224.1,727.9 228.1,731.9C232.2,735.9 235.9,741.3 239.3,749.2C242.8,757.2 246.3,767.2 248.8,779.6C251.4,792 255,809.2 254.4,823.8C253.9,838.4 250.1,854.3 245.6,867.2C241.1,880.1 238,896 227.5,901.3C216.9,906.5 192.4,905.1 182.5,898.7Z" fill="url(#g25)" filter="url(#b1)"/>
<path d="M182.5,898.7C172.7,892.3 171.4,876.1 168.4,862.8C165.4,849.5 163.4,833.2 164.6,818.7C165.7,804.1 171.2,787.5 175.2,775.4C179.1,763.3 183.8,753.8 188.1,746.3C192.4,738.8 196.7,733.9 201.2,730.4C205.7,726.8 210.5,724.7 215,725C219.5,725.3 224.1,727.9 228.1,731.9C232.2,735.9 235.9,741.3 239.3,749.2C242.8,757.2 246.3,767.2 248.8,779.6C251.4,792 255,809.2 254.4,823.8C253.9,838.4 250.1,854.3 245.6,867.2C241.1,880.1 238,896 227.5,901.3C216.9,906.5 192.4,905.1 182.5,898.7Z" fill="url(#g26)" filter="url(#b1)"/>
<path d="M85,1010C73.7,1002 71.2,980 67,962C62.8,944 59.7,922 60,902C60.3,882 65.4,858.8 69,842C72.6,825.2 77.2,811.8 81.5,801.2C85.8,790.6 90.2,783.6 95,778.4C99.8,773.2 105,770 110,770C115,770 120.2,773.2 125,778.4C129.8,783.6 134.2,790.6 138.5,801.2C142.8,811.8 147.4,825.2 151,842C154.6,858.8 159.7,882 160,902C160.3,922 157.2,944 153,962C148.8,980 146.3,1002 135,1010C123.7,1018 96.3,1018 85,1010Z" fill="#d9841a" filter="url(#b7)" opacity="0.8" transform="translate(5,3)"/>
<path d="M85,1010C73.7,1002 71.2,980 67,962C62.8,944 59.7,922 60,902C60.3,882 65.4,858.8 69,842C72.6,825.2 77.2,811.8 81.5,801.2C85.8,790.6 90.2,783.6 95,778.4C99.8,773.2 105,770 110,770C115,770 120.2,773.2 125,778.4C129.8,783.6 134.2,790.6 138.5,801.2C142.8,811.8 147.4,825.2 151,842C154.6,858.8 159.7,882 160,902C160.3,922 157.2,944 153,962C148.8,980 146.3,1002 135,1010C123.7,1018 96.3,1018 85,1010Z" fill="url(#g27)" filter="url(#b1)"/>
<path d="M85,1010C73.7,1002 71.2,980 67,962C62.8,944 59.7,922 60,902C60.3,882 65.4,858.8 69,842C72.6,825.2 77.2,811.8 81.5,801.2C85.8,790.6 90.2,783.6 95,778.4C99.8,773.2 105,770 110,770C115,770 120.2,773.2 125,778.4C129.8,783.6 134.2,790.6 138.5,801.2C142.8,811.8 147.4,825.2 151,842C154.6,858.8 159.7,882 160,902C160.3,922 157.2,944 153,962C148.8,980 146.3,1002 135,1010C123.7,1018 96.3,1018 85,1010Z" fill="url(#g28)" filter="url(#b1)"/>
<path d="M723,683C738,665.2 760.5,660 780,660C799.5,660 832.2,666.3 840,683C847.8,699.7 837,737.7 827,760C817,782.3 794.5,804.8 780,817C765.5,829.2 755,841.3 740,833C725,824.7 692.8,792 690,767C687.2,742 708,700.8 723,683Z" fill="#f0aa2c" filter="url(#b14)" opacity="0.5"/>
<path d="M654.9,807.7C652.4,801.4 657.1,792.7 660.2,785C663.2,777.2 667.7,768.3 673.1,761.2C678.5,754 686.6,747.1 692.5,742.1C698.4,737 703.7,733.5 708.3,731C712.8,728.4 716.4,727.1 719.7,726.6C723,726.2 726,726.5 728,728C730,729.5 731.3,732.2 731.9,735.4C732.4,738.7 732.4,742.6 731.4,747.7C730.3,752.8 728.7,759 725.7,766.1C722.7,773.3 718.7,783.2 713.6,790.5C708.5,797.9 701.4,804.9 695,810.2C688.6,815.5 681.8,822.8 675.1,822.3C668.4,821.9 657.4,813.9 654.9,807.7Z" fill="#d9841a" filter="url(#b7)" opacity="0.8" transform="translate(5,3)"/>
<path d="M654.9,807.7C652.4,801.4 657.1,792.7 660.2,785C663.2,777.2 667.7,768.3 673.1,761.2C678.5,754 686.6,747.1 692.5,742.1C698.4,737 703.7,733.5 708.3,731C712.8,728.4 716.4,727.1 719.7,726.6C723,726.2 726,726.5 728,728C730,729.5 731.3,732.2 731.9,735.4C732.4,738.7 732.4,742.6 731.4,747.7C730.3,752.8 728.7,759 725.7,766.1C722.7,773.3 718.7,783.2 713.6,790.5C708.5,797.9 701.4,804.9 695,810.2C688.6,815.5 681.8,822.8 675.1,822.3C668.4,821.9 657.4,813.9 654.9,807.7Z" fill="url(#g29)" filter="url(#b1)"/>
<path d="M654.9,807.7C652.4,801.4 657.1,792.7 660.2,785C663.2,777.2 667.7,768.3 673.1,761.2C678.5,754 686.6,747.1 692.5,742.1C698.4,737 703.7,733.5 708.3,731C712.8,728.4 716.4,727.1 719.7,726.6C723,726.2 726,726.5 728,728C730,729.5 731.3,732.2 731.9,735.4C732.4,738.7 732.4,742.6 731.4,747.7C730.3,752.8 728.7,759 725.7,766.1C722.7,773.3 718.7,783.2 713.6,790.5C708.5,797.9 701.4,804.9 695,810.2C688.6,815.5 681.8,822.8 675.1,822.3C668.4,821.9 657.4,813.9 654.9,807.7Z" fill="url(#g30)" filter="url(#b1)"/>
<path d="M671.4,964.7C666.6,953.5 674.6,934.6 679.6,918.3C684.6,902 692.2,882.8 701.4,866.7C710.7,850.5 724.9,833.8 735.1,821.6C745.3,809.4 754.8,800.4 762.8,793.6C770.8,786.8 777.2,782.9 783.1,780.6C788.9,778.4 794.3,777.9 798,780C801.7,782.1 804.2,786.8 805.4,793C806.6,799.2 806.7,806.7 805.2,817.1C803.6,827.5 801,840.3 796.1,855.4C791.2,870.5 784.5,891.5 775.8,907.8C767,924.2 754.8,940.8 743.6,953.7C732.4,966.6 720.6,983.5 708.6,985.3C696.6,987.1 676.2,975.9 671.4,964.7Z" fill="#d9841a" filter="url(#b7)" opacity="0.8" transform="translate(5,3)"/>
<path d="M671.4,964.7C666.6,953.5 674.6,934.6 679.6,918.3C684.6,902 692.2,882.8 701.4,866.7C710.7,850.5 724.9,833.8 735.1,821.6C745.3,809.4 754.8,800.4 762.8,793.6C770.8,786.8 777.2,782.9 783.1,780.6C788.9,778.4 794.3,777.9 798,780C801.7,782.1 804.2,786.8 805.4,793C806.6,799.2 806.7,806.7 805.2,817.1C803.6,827.5 801,840.3 796.1,855.4C791.2,870.5 784.5,891.5 775.8,907.8C767,924.2 754.8,940.8 743.6,953.7C732.4,966.6 720.6,983.5 708.6,985.3C696.6,987.1 676.2,975.9 671.4,964.7Z" fill="url(#g31)" filter="url(#b1)"/>
<path d="M671.4,964.7C666.6,953.5 674.6,934.6 679.6,918.3C684.6,902 692.2,882.8 701.4,866.7C710.7,850.5 724.9,833.8 735.1,821.6C745.3,809.4 754.8,800.4 762.8,793.6C770.8,786.8 777.2,782.9 783.1,780.6C788.9,778.4 794.3,777.9 798,780C801.7,782.1 804.2,786.8 805.4,793C806.6,799.2 806.7,806.7 805.2,817.1C803.6,827.5 801,840.3 796.1,855.4C791.2,870.5 784.5,891.5 775.8,907.8C767,924.2 754.8,940.8 743.6,953.7C732.4,966.6 720.6,983.5 708.6,985.3C696.6,987.1 676.2,975.9 671.4,964.7Z" fill="url(#g32)" filter="url(#b1)"/>
<path d="M607.1,963.6C602.3,953.2 609.6,937.9 614,924.3C618.4,910.8 625.2,895.1 633.7,882.4C642.2,869.6 655.4,857 664.9,847.7C674.4,838.5 683.2,832 690.7,827.1C698.2,822.2 704.2,819.7 709.8,818.6C715.3,817.4 720.4,817.7 724,820C727.6,822.3 730,826.8 731.3,832.3C732.5,837.8 732.8,844.4 731.5,853.2C730.3,862 728,872.8 723.7,885.3C719.3,897.7 713.4,915.1 705.4,928.1C697.4,941.2 686,954 675.6,963.7C665.2,973.4 654.3,986.5 642.9,986.4C631.5,986.4 611.9,973.9 607.1,963.6Z" fill="#d9841a" filter="url(#b7)" opacity="0.8" transform="translate(5,3)"/>
<path d="M607.1,963.6C602.3,953.2 609.6,937.9 614,924.3C618.4,910.8 625.2,895.1 633.7,882.4C642.2,869.6 655.4,857 664.9,847.7C674.4,838.5 683.2,832 690.7,827.1C698.2,822.2 704.2,819.7 709.8,818.6C715.3,817.4 720.4,817.7 724,820C727.6,822.3 730,826.8 731.3,832.3C732.5,837.8 732.8,844.4 731.5,853.2C730.3,862 728,872.8 723.7,885.3C719.3,897.7 713.4,915.1 705.4,928.1C697.4,941.2 686,954 675.6,963.7C665.2,973.4 654.3,986.5 642.9,986.4C631.5,986.4 611.9,973.9 607.1,963.6Z" fill="url(#g33)" filter="url(#b1)"/>
<path d="M607.1,963.6C602.3,953.2 609.6,937.9 614,924.3C618.4,910.8 625.2,895.1 633.7,882.4C642.2,869.6 655.4,857 664.9,847.7C674.4,838.5 683.2,832 690.7,827.1C698.2,822.2 704.2,819.7 709.8,818.6C715.3,817.4 720.4,817.7 724,820C727.6,822.3 730,826.8 731.3,832.3C732.5,837.8 732.8,844.4 731.5,853.2C730.3,862 728,872.8 723.7,885.3C719.3,897.7 713.4,915.1 705.4,928.1C697.4,941.2 686,954 675.6,963.7C665.2,973.4 654.3,986.5 642.9,986.4C631.5,986.4 611.9,973.9 607.1,963.6Z" fill="url(#g34)" filter="url(#b1)"/>
<path d="M393.7,947.5C382.5,934.3 387.6,912.4 389.1,893.4C390.6,874.5 394.9,852.3 402.8,833.7C410.7,815.1 425.8,795.9 436.6,781.9C447.4,768 458.2,757.7 467.6,750C477,742.2 485.1,737.8 493,735.4C501,732.9 508.7,732.5 515,735C521.3,737.5 526.6,743.1 530.7,750.4C534.7,757.7 537.6,766.4 539,778.5C540.5,790.6 541.2,805.5 539.4,823.1C537.6,840.6 535.3,864.9 528.2,883.8C521.1,902.7 508.9,921.8 496.9,936.6C484.9,951.3 473.5,970.7 456.3,972.5C439.1,974.4 404.9,960.6 393.7,947.5Z" fill="#d9841a" filter="url(#b7)" opacity="0.8" transform="translate(5,3)"/>
<path d="M393.7,947.5C382.5,934.3 387.6,912.4 389.1,893.4C390.6,874.5 394.9,852.3 402.8,833.7C410.7,815.1 425.8,795.9 436.6,781.9C447.4,768 458.2,757.7 467.6,750C477,742.2 485.1,737.8 493,735.4C501,732.9 508.7,732.5 515,735C521.3,737.5 526.6,743.1 530.7,750.4C534.7,757.7 537.6,766.4 539,778.5C540.5,790.6 541.2,805.5 539.4,823.1C537.6,840.6 535.3,864.9 528.2,883.8C521.1,902.7 508.9,921.8 496.9,936.6C484.9,951.3 473.5,970.7 456.3,972.5C439.1,974.4 404.9,960.6 393.7,947.5Z" fill="url(#g35)" filter="url(#b1)"/>
<path d="M393.7,947.5C382.5,934.3 387.6,912.4 389.1,893.4C390.6,874.5 394.9,852.3 402.8,833.7C410.7,815.1 425.8,795.9 436.6,781.9C447.4,768 458.2,757.7 467.6,750C477,742.2 485.1,737.8 493,735.4C501,732.9 508.7,732.5 515,735C521.3,737.5 526.6,743.1 530.7,750.4C534.7,757.7 537.6,766.4 539,778.5C540.5,790.6 541.2,805.5 539.4,823.1C537.6,840.6 535.3,864.9 528.2,883.8C521.1,902.7 508.9,921.8 496.9,936.6C484.9,951.3 473.5,970.7 456.3,972.5C439.1,974.4 404.9,960.6 393.7,947.5Z" fill="url(#g36)" filter="url(#b1)"/>
<path d="M296.4,957.2C281.6,949.9 279.6,933.1 275.2,919.2C270.7,905.2 267.8,888.4 269.5,873.4C271.2,858.4 279.5,841.6 285.3,829.4C291.2,817.2 298.2,807.7 304.7,800.2C311.2,792.7 317.6,788 324.3,784.6C331,781.3 338.3,779.4 345,780C351.7,780.6 358.6,783.5 364.7,788C370.7,792.4 376.2,798.2 381.4,806.6C386.6,815 391.9,825.6 395.7,838.6C399.4,851.6 404.8,869.6 404,884.6C403.2,899.6 397.6,915.8 390.8,928.8C384.1,941.9 379.4,958.1 363.6,962.8C347.9,967.5 311.1,964.5 296.4,957.2Z" fill="#d9841a" filter="url(#b7)" opacity="0.8" transform="translate(5,3)"/>
<path d="M296.4,957.2C281.6,949.9 279.6,933.1 275.2,919.2C270.7,905.2 267.8,888.4 269.5,873.4C271.2,858.4 279.5,841.6 285.3,829.4C291.2,817.2 298.2,807.7 304.7,800.2C311.2,792.7 317.6,788 324.3,784.6C331,781.3 338.3,779.4 345,780C351.7,780.6 358.6,783.5 364.7,788C370.7,792.4 376.2,798.2 381.4,806.6C386.6,815 391.9,825.6 395.7,838.6C399.4,851.6 404.8,869.6 404,884.6C403.2,899.6 397.6,915.8 390.8,928.8C384.1,941.9 379.4,958.1 363.6,962.8C347.9,967.5 311.1,964.5 296.4,957.2Z" fill="url(#g37)" filter="url(#b1)"/>
<path d="M296.4,957.2C281.6,949.9 279.6,933.1 275.2,919.2C270.7,905.2 267.8,888.4 269.5,873.4C271.2,858.4 279.5,841.6 285.3,829.4C291.2,817.2 298.2,807.7 304.7,800.2C311.2,792.7 317.6,788 324.3,784.6C331,781.3 338.3,779.4 345,780C351.7,780.6 358.6,783.5 364.7,788C370.7,792.4 376.2,798.2 381.4,806.6C386.6,815 391.9,825.6 395.7,838.6C399.4,851.6 404.8,869.6 404,884.6C403.2,899.6 397.6,915.8 390.8,928.8C384.1,941.9 379.4,958.1 363.6,962.8C347.9,967.5 311.1,964.5 296.4,957.2Z" fill="url(#g38)" filter="url(#b1)"/>
<path d="M566.7,920.2C555.8,909.9 558.5,893.1 558.2,878.5C558,863.9 559.9,846.8 565.3,832.5C570.7,818.2 582.3,803.5 590.5,792.8C598.8,782.1 607.3,774.2 614.9,768.3C622.5,762.3 629.2,759 635.9,757.2C642.6,755.3 649.3,755 655,757C660.7,759 665.8,763.3 669.9,769C674,774.6 677.2,781.4 679.5,790.7C681.8,800 683.6,811.5 683.5,825C683.3,838.5 683.3,857.3 678.7,871.8C674.1,886.4 665,901 655.8,912.3C646.5,923.6 638.2,938.5 623.3,939.8C608.5,941.1 577.5,930.4 566.7,920.2Z" fill="#d9841a" filter="url(#b7)" opacity="0.8" transform="translate(5,3)"/>
<path d="M566.7,920.2C555.8,909.9 558.5,893.1 558.2,878.5C558,863.9 559.9,846.8 565.3,832.5C570.7,818.2 582.3,803.5 590.5,792.8C598.8,782.1 607.3,774.2 614.9,768.3C622.5,762.3 629.2,759 635.9,757.2C642.6,755.3 649.3,755 655,757C660.7,759 665.8,763.3 669.9,769C674,774.6 677.2,781.4 679.5,790.7C681.8,800 683.6,811.5 683.5,825C683.3,838.5 683.3,857.3 678.7,871.8C674.1,886.4 665,901 655.8,912.3C646.5,923.6 638.2,938.5 623.3,939.8C608.5,941.1 577.5,930.4 566.7,920.2Z" fill="url(#g39)" filter="url(#b1)"/>
<path d="M566.7,920.2C555.8,909.9 558.5,893.1 558.2,878.5C558,863.9 559.9,846.8 565.3,832.5C570.7,818.2 582.3,803.5 590.5,792.8C598.8,782.1 607.3,774.2 614.9,768.3C622.5,762.3 629.2,759 635.9,757.2C642.6,755.3 649.3,755 655,757C660.7,759 665.8,763.3 669.9,769C674,774.6 677.2,781.4 679.5,790.7C681.8,800 683.6,811.5 683.5,825C683.3,838.5 683.3,857.3 678.7,871.8C674.1,886.4 665,901 655.8,912.3C646.5,923.6 638.2,938.5 623.3,939.8C608.5,941.1 577.5,930.4 566.7,920.2Z" fill="url(#g40)" filter="url(#b1)"/>
<path d="M156.2,1030C143.2,1024.6 140.3,1009.8 135.6,997.6C130.8,985.5 127.1,970.6 127.5,957.1C127.9,943.6 133.7,927.9 137.8,916.6C142,905.3 147.2,896.2 152.2,889.1C157.2,881.9 162.3,877.2 167.8,873.7C173.2,870.2 179.2,868 185,868C190.8,868 196.8,870.2 202.2,873.7C207.7,877.2 212.8,881.9 217.8,889.1C222.8,896.2 228,905.3 232.2,916.6C236.3,927.9 242.1,943.6 242.5,957.1C242.9,970.6 239.2,985.5 234.4,997.6C229.7,1009.8 226.8,1024.6 213.8,1030C200.7,1035.4 169.3,1035.4 156.2,1030Z" fill="#d9841a" filter="url(#b7)" opacity="0.8" transform="translate(5,3)"/>
<path d="M156.2,1030C143.2,1024.6 140.3,1009.8 135.6,997.6C130.8,985.5 127.1,970.6 127.5,957.1C127.9,943.6 133.7,927.9 137.8,916.6C142,905.3 147.2,896.2 152.2,889.1C157.2,881.9 162.3,877.2 167.8,873.7C173.2,870.2 179.2,868 185,868C190.8,868 196.8,870.2 202.2,873.7C207.7,877.2 212.8,881.9 217.8,889.1C222.8,896.2 228,905.3 232.2,916.6C236.3,927.9 242.1,943.6 242.5,957.1C242.9,970.6 239.2,985.5 234.4,997.6C229.7,1009.8 226.8,1024.6 213.8,1030C200.7,1035.4 169.3,1035.4 156.2,1030Z" fill="url(#g41)" filter="url(#b1)"/>
<path d="M156.2,1030C143.2,1024.6 140.3,1009.8 135.6,997.6C130.8,985.5 127.1,970.6 127.5,957.1C127.9,943.6 133.7,927.9 137.8,916.6C142,905.3 147.2,896.2 152.2,889.1C157.2,881.9 162.3,877.2 167.8,873.7C173.2,870.2 179.2,868 185,868C190.8,868 196.8,870.2 202.2,873.7C207.7,877.2 212.8,881.9 217.8,889.1C222.8,896.2 228,905.3 232.2,916.6C236.3,927.9 242.1,943.6 242.5,957.1C242.9,970.6 239.2,985.5 234.4,997.6C229.7,1009.8 226.8,1024.6 213.8,1030C200.7,1035.4 169.3,1035.4 156.2,1030Z" fill="url(#g42)" filter="url(#b1)"/>
<path d="M263.8,1040.6C254,1035.3 251.4,1020 247.5,1007.5C243.6,995 240.4,979.7 240.3,965.7C240.1,951.7 244,935.3 246.7,923.4C249.4,911.6 253,902.1 256.4,894.6C259.9,887 263.5,882 267.4,878.3C271.4,874.5 275.8,872.1 280,872C284.2,871.9 288.8,874 292.9,877.5C297.1,881 301,885.8 304.9,893.1C308.8,900.4 312.9,909.7 316.3,921.4C319.7,933 324.5,949.1 325.2,963.1C325.9,977.1 323.7,992.6 320.5,1005.3C317.4,1018 315.7,1033.5 306.2,1039.4C296.8,1045.3 273.6,1045.9 263.8,1040.6Z" fill="#d9841a" filter="url(#b7)" opacity="0.8" transform="translate(5,3)"/>
<path d="M263.8,1040.6C254,1035.3 251.4,1020 247.5,1007.5C243.6,995 240.4,979.7 240.3,965.7C240.1,951.7 244,935.3 246.7,923.4C249.4,911.6 253,902.1 256.4,894.6C259.9,887 263.5,882 267.4,878.3C271.4,874.5 275.8,872.1 280,872C284.2,871.9 288.8,874 292.9,877.5C297.1,881 301,885.8 304.9,893.1C308.8,900.4 312.9,909.7 316.3,921.4C319.7,933 324.5,949.1 325.2,963.1C325.9,977.1 323.7,992.6 320.5,1005.3C317.4,1018 315.7,1033.5 306.2,1039.4C296.8,1045.3 273.6,1045.9 263.8,1040.6Z" fill="url(#g43)" filter="url(#b1)"/>
<path d="M263.8,1040.6C254,1035.3 251.4,1020 247.5,1007.5C243.6,995 240.4,979.7 240.3,965.7C240.1,951.7 244,935.3 246.7,923.4C249.4,911.6 253,902.1 256.4,894.6C259.9,887 263.5,882 267.4,878.3C271.4,874.5 275.8,872.1 280,872C284.2,871.9 288.8,874 292.9,877.5C297.1,881 301,885.8 304.9,893.1C308.8,900.4 312.9,909.7 316.3,921.4C319.7,933 324.5,949.1 325.2,963.1C325.9,977.1 323.7,992.6 320.5,1005.3C317.4,1018 315.7,1033.5 306.2,1039.4C296.8,1045.3 273.6,1045.9 263.8,1040.6Z" fill="url(#g44)" filter="url(#b1)"/>
<path d="M490.6,1056.7C484.2,1037.4 500.4,1011 511.1,987.5C521.8,964 537.1,937 554.9,915.5C572.6,893.9 598.7,873.4 617.4,858.4C636.2,843.4 653.2,833 667.5,825.5C681.8,817.9 693,814.4 703.1,813.2C713.2,811.9 722.1,813.3 728,818C733.9,822.7 737.3,831.1 738.3,841.2C739.4,851.3 738.5,863 734.4,878.6C730.3,894.3 724.1,913.2 713.8,934.8C703.4,956.5 689.3,986.6 672.3,1008.7C655.4,1030.9 632.6,1051.9 612.1,1067.7C591.6,1083.5 569.6,1105.2 549.4,1103.3C529.1,1101.5 497,1076 490.6,1056.7Z" fill="#d9841a" filter="url(#b7)" opacity="0.8" transform="translate(5,3)"/>
<path d="M490.6,1056.7C484.2,1037.4 500.4,1011 511.1,987.5C521.8,964 537.1,937 554.9,915.5C572.6,893.9 598.7,873.4 617.4,858.4C636.2,843.4 653.2,833 667.5,825.5C681.8,817.9 693,814.4 703.1,813.2C713.2,811.9 722.1,813.3 728,818C733.9,822.7 737.3,831.1 738.3,841.2C739.4,851.3 738.5,863 734.4,878.6C730.3,894.3 724.1,913.2 713.8,934.8C703.4,956.5 689.3,986.6 672.3,1008.7C655.4,1030.9 632.6,1051.9 612.1,1067.7C591.6,1083.5 569.6,1105.2 549.4,1103.3C529.1,1101.5 497,1076 490.6,1056.7Z" fill="url(#g45)" filter="url(#b1)"/>
<path d="M490.6,1056.7C484.2,1037.4 500.4,1011 511.1,987.5C521.8,964 537.1,937 554.9,915.5C572.6,893.9 598.7,873.4 617.4,858.4C636.2,843.4 653.2,833 667.5,825.5C681.8,817.9 693,814.4 703.1,813.2C713.2,811.9 722.1,813.3 728,818C733.9,822.7 737.3,831.1 738.3,841.2C739.4,851.3 738.5,863 734.4,878.6C730.3,894.3 724.1,913.2 713.8,934.8C703.4,956.5 689.3,986.6 672.3,1008.7C655.4,1030.9 632.6,1051.9 612.1,1067.7C591.6,1083.5 569.6,1105.2 549.4,1103.3C529.1,1101.5 497,1076 490.6,1056.7Z" fill="url(#g46)" filter="url(#b1)"/>
<path d="M399,1064.7C390.7,1046.3 403.1,1024.7 410.7,1004.9C418.3,985 430,962.8 444.6,945.8C459.1,928.8 481.9,913.8 498.2,902.9C514.5,892 529.7,885 542.6,880.2C555.5,875.4 565.9,873.8 575.5,874.1C585,874.4 593.8,876.9 600,882C606.2,887.1 610.4,895.2 612.6,904.5C614.8,913.8 615.3,924.3 613.2,937.9C611.1,951.5 607.3,967.7 599.8,985.9C592.3,1004.1 582.2,1029.4 568.4,1047C554.7,1064.7 535.2,1080.6 517.3,1091.9C499.4,1103.3 480.7,1119.9 461,1115.3C441.3,1110.8 407.4,1083.1 399,1064.7Z" fill="#d9841a" filter="url(#b7)" opacity="0.8" transform="translate(5,3)"/>
<path d="M399,1064.7C390.7,1046.3 403.1,1024.7 410.7,1004.9C418.3,985 430,962.8 444.6,945.8C459.1,928.8 481.9,913.8 498.2,902.9C514.5,892 529.7,885 542.6,880.2C555.5,875.4 565.9,873.8 575.5,874.1C585,874.4 593.8,876.9 600,882C606.2,887.1 610.4,895.2 612.6,904.5C614.8,913.8 615.3,924.3 613.2,937.9C611.1,951.5 607.3,967.7 599.8,985.9C592.3,1004.1 582.2,1029.4 568.4,1047C554.7,1064.7 535.2,1080.6 517.3,1091.9C499.4,1103.3 480.7,1119.9 461,1115.3C441.3,1110.8 407.4,1083.1 399,1064.7Z" fill="url(#g47)" filter="url(#b1)"/>
<path d="M399,1064.7C390.7,1046.3 403.1,1024.7 410.7,1004.9C418.3,985 430,962.8 444.6,945.8C459.1,928.8 481.9,913.8 498.2,902.9C514.5,892 529.7,885 542.6,880.2C555.5,875.4 565.9,873.8 575.5,874.1C585,874.4 593.8,876.9 600,882C606.2,887.1 610.4,895.2 612.6,904.5C614.8,913.8 615.3,924.3 613.2,937.9C611.1,951.5 607.3,967.7 599.8,985.9C592.3,1004.1 582.2,1029.4 568.4,1047C554.7,1064.7 535.2,1080.6 517.3,1091.9C499.4,1103.3 480.7,1119.9 461,1115.3C441.3,1110.8 407.4,1083.1 399,1064.7Z" fill="url(#g48)" filter="url(#b1)"/>
<path d="M313.9,1051.3C303.4,1043.4 304.5,1031.5 303.1,1021C301.8,1010.6 302.1,998.5 305.8,988.6C309.5,978.7 318.7,968.9 325.2,961.7C331.8,954.6 338.8,949.5 345.1,945.7C351.3,941.9 357.1,939.9 362.9,939C368.8,938 374.8,938.3 380,940C385.2,941.7 390.2,945.2 394.3,949.4C398.3,953.7 401.8,958.7 404.5,965.5C407.3,972.3 409.8,980.6 410.8,990.3C411.7,999.9 413.2,1013.3 410.2,1023.4C407.2,1033.5 400.2,1043.4 392.9,1051C385.5,1058.5 379.2,1068.6 366.1,1068.7C352.9,1068.8 324.4,1059.2 313.9,1051.3Z" fill="#d9841a" filter="url(#b7)" opacity="0.8" transform="translate(5,3)"/>
<path d="M313.9,1051.3C303.4,1043.4 304.5,1031.5 303.1,1021C301.8,1010.6 302.1,998.5 305.8,988.6C309.5,978.7 318.7,968.9 325.2,961.7C331.8,954.6 338.8,949.5 345.1,945.7C351.3,941.9 357.1,939.9 362.9,939C368.8,938 374.8,938.3 380,940C385.2,941.7 390.2,945.2 394.3,949.4C398.3,953.7 401.8,958.7 404.5,965.5C407.3,972.3 409.8,980.6 410.8,990.3C411.7,999.9 413.2,1013.3 410.2,1023.4C407.2,1033.5 400.2,1043.4 392.9,1051C385.5,1058.5 379.2,1068.6 366.1,1068.7C352.9,1068.8 324.4,1059.2 313.9,1051.3Z" fill="url(#g49)" filter="url(#b1)"/>
<path d="M313.9,1051.3C303.4,1043.4 304.5,1031.5 303.1,1021C301.8,1010.6 302.1,998.5 305.8,988.6C309.5,978.7 318.7,968.9 325.2,961.7C331.8,954.6 338.8,949.5 345.1,945.7C351.3,941.9 357.1,939.9 362.9,939C368.8,938 374.8,938.3 380,940C385.2,941.7 390.2,945.2 394.3,949.4C398.3,953.7 401.8,958.7 404.5,965.5C407.3,972.3 409.8,980.6 410.8,990.3C411.7,999.9 413.2,1013.3 410.2,1023.4C407.2,1033.5 400.2,1043.4 392.9,1051C385.5,1058.5 379.2,1068.6 366.1,1068.7C352.9,1068.8 324.4,1059.2 313.9,1051.3Z" fill="url(#g50)" filter="url(#b1)"/>
<path d="M85,100H1620V1010H85Z" fill="url(#g51)"/>
<path d="M1092,170C1093,168.7 1097.2,170.3 1099,172C1100.8,173.7 1103.2,178 1103,180C1102.8,182 1099.7,184 1098,184C1096.3,184 1094,182.3 1093,180C1092,177.7 1091,171.3 1092,170Z" fill="#9a6a1c" filter="url(#b1.5)" opacity="0.8"/>
<path d="M1548,797C1549.7,796.3 1554.5,798.2 1556,800C1557.5,801.8 1558,806.3 1557,808C1556,809.7 1551.8,810.7 1550,810C1548.2,809.3 1546.3,806.2 1546,804C1545.7,801.8 1546.3,797.7 1548,797Z" fill="#8a6a2a" filter="url(#b1.5)" opacity="0.8"/>
<path d="M1136,706C1137.2,704 1143.8,700.3 1146,700C1148.2,699.7 1150.2,702 1149,704C1147.8,706 1141.2,711.7 1139,712C1136.8,712.3 1134.8,708 1136,706Z" fill="#a87a1c" filter="url(#b1.5)" opacity="0.6"/>
<path d="M1144,722C1144.8,720.2 1150.2,716.3 1152,716C1153.8,715.7 1155.8,718.2 1155,720C1154.2,721.8 1148.8,726.7 1147,727C1145.2,727.3 1143.2,723.8 1144,722Z" fill="#a87a1c" filter="url(#b1.5)" opacity="0.5"/>
</g>
</svg>
</div>
<!-- STATUS BAR -->
<div id="status" class="abs" style="left:72px;top:1002px;width:1553px;height:19px;background:#535353">
  <div class="abs" style="left:2px;top:1px;width:50px;height:18px;background:#4a4a4a"></div>
  <span class="t" style="left:6px;top:3px;font-size:11.500px;color:#f0f0f0">94.15%</span>
  <span class="t" style="left:85px;top:3px;font-size:11.500px;color:#f0f0f0">文档:65.9M/203.7M</span>
  <svg class="abs" style="left:218px;top:2px" width="40" height="15" viewBox="290 1004 40 15" fill="none" stroke="#d0d0d0" stroke-width="1.200"><path d="M295,1006l3.500,5l-3.500,5"/><path d="M319,1008l-3,3.500l3,3.500" stroke="#8a8a8a"/></svg>
  <div class="abs" style="left:239px;top:2px;width:1300px;height:15px;background:#4a4a4a"></div>
  <div class="abs" style="left:871px;top:3px;width:229px;height:12px;background:#6a6a6a;border-radius:1px"></div>
  <svg class="abs" style="left:240px;top:2px" width="20" height="15" viewBox="312 1004 20 15" fill="none" stroke="#8a8a8a" stroke-width="1.200"><path d="M319,1008l-3,3.500l3,3.500"/></svg>
  <svg class="abs" style="left:1520px;top:2px" width="20" height="15" viewBox="1592 1004 20 15" fill="none" stroke="#8a8a8a" stroke-width="1.200"><path d="M1598,1008l3,3.500l-3,3.500"/></svg>
</div>
<!-- RIGHT DOCK -->
<!-- vertical scrollbar column + dock header -->
<div class="abs" style="left:1610px;top:92px;width:15px;height:910px;background:#505050"></div>
<svg class="abs" style="left:1610px;top:92px" width="15" height="17" viewBox="0 0 15 17" fill="none" stroke="#9a9a9a" stroke-width="1.2"><path d="M3.500,11.500L7.500,7.500L11.500,11.500"/></svg>
<svg class="abs" style="left:1610px;top:975px" width="15" height="17" viewBox="0 0 15 17" fill="none" stroke="#7e7e7e" stroke-width="1.200"><path d="M3.500,6L7.500,10L11.500,6"/></svg>
<div class="abs" style="left:1625px;top:64px;width:4px;height:957px;background:#434343"></div>
<div class="abs" style="left:1629px;top:64px;width:291px;height:11px;background:#444;border-bottom:1px solid #3a3a3a"></div>
<svg class="abs" style="left:1629px;top:64px" width="291" height="11" viewBox="1629 64 291 11" fill="none" stroke="#d0d0d0" stroke-width="1.300" stroke-linecap="round" stroke-linejoin="round"><path d="M1656.200,66.300v5.400l-3.200,-2.700ZM1660.400,66.300v5.400l-3.200,-2.700ZM1906.800,66.300v5.400l3.200,-2.700ZM1911,66.300v5.400l3.200,-2.700Z" fill="#d6d6d6" stroke="none"/></svg>
<!-- icon column -->
<div id="iconcol" class="abs" style="left:1629px;top:76px;width:38px;height:945px;background:#535353;border-left:1px solid #3e3e3e">
  <div class="abs" style="left:0;top:39px;width:37px;height:2px;background:#424242"></div>
  <div class="abs" style="left:0;top:80px;width:37px;height:2px;background:#424242"></div>
  <svg class="abs" style="left:0;top:0" width="37" height="82" viewBox="1630 76 37 82">
    <path d="M1640,80.500h18M1640,121.500h18" stroke="#484848" stroke-width="3" stroke-dasharray="1 1"/>
    <!-- palette -->
    <g transform="translate(1649,98.500) scale(1,-1)"><path d="M-1,-6.500c5.500,-.5,10,2,10,6c0,2.500-2.500,3.500-4.500,3c-2-.5-3,.5-2.500,2c.4,1.500-1,2.500-3,2.500c-5,0-8.500-3-8.500-6.500c0-3.500,3.500-6.500,8.500-7Z" fill="#e2e2e2"/><g fill="#535353"><circle cx="-5" cy="-1" r="1.500"/><circle cx="-1.500" cy="-3.600" r="1.500"/><circle cx="3" cy="-3.300" r="1.500"/><circle cx="-4" cy="3" r="1.500"/><circle cx="0" cy="4.500" r="1.300"/></g></g>
    <!-- clone source -->
    <g transform="translate(1648,139)" fill="#e2e2e2"><rect x="-10" y="-8" width="2" height="2"/><rect x="-7" y="-8" width="5" height="2"/><rect x="-10" y="-4.500" width="2" height="2"/><rect x="-7" y="-4.500" width="4" height="2"/><rect x="-10" y="-1" width="2" height="2"/><rect x="-7" y="-1" width="3" height="2"/><circle cx="4" cy="-3.500" r="3.200"/><path d="M2.600,-1h2.800l.8,4.500h-4.400Z"/><rect x="-2" y="3.500" width="12" height="3"/><rect x="-2" y="8" width="12" height="1.500"/></g>
  </svg>
</div>
<div class="abs" style="left:1667px;top:76px;width:2px;height:945px;background:#3c3c3c"></div>
<!-- right dock panels -->
<div id="rightdock" class="abs">
  <!-- INFO PANEL -->
  <div class="ptabbar" style="top:0;height:27px"><div class="ptab on" style="left:0;width:44px;height:27px;line-height:26px;font-size:12.500px;padding-top:0">信息</div></div>
  <svg class="abs" style="left:232px;top:7px" width="12" height="12" viewBox="0 0 12 12" stroke="#cfcfcf" stroke-width="1.200"><path d="M1,2.500h10M1,5.500h10M1,8.500h10"/></svg>
  <div class="abs" style="left:0;top:113px;width:251px;height:1px;background:#464646"></div>
  <div class="abs" style="left:0;top:148px;width:251px;height:1px;background:#464646"></div>
  <div class="abs" style="left:0;top:177px;width:251px;height:1px;background:#464646"></div>
  <div class="abs" style="left:125px;top:28px;width:1px;height:120px;background:#464646"></div>
  <span class="it" style="left:33px;top:34px">K&nbsp;&nbsp;:</span>
  <span class="it" style="left:28px;top:90px">8 位</span>
  <span class="it" style="left:157px;top:34px">C&nbsp;&nbsp;:</span>
  <span class="it" style="left:156px;top:48px">M&nbsp;:</span>
  <span class="it" style="left:157px;top:62px">Y&nbsp;&nbsp;:</span>
  <span class="it" style="left:157px;top:76px">K&nbsp;&nbsp;:</span>
  <span class="it" style="left:152px;top:90px">8 位</span>
  <span class="it" style="left:33px;top:118px">X&nbsp;&nbsp;:</span>
  <span class="it" style="left:33px;top:132px">Y&nbsp;&nbsp;:</span>
  <span class="it" style="left:154px;top:118px">W&nbsp;:</span>
  <span class="it" style="left:155px;top:132px">H&nbsp;&nbsp;:</span>
  <span class="it" style="left:197px;top:118px">3507</span>
  <span class="it" style="left:197px;top:132px">3576</span>
  <svg class="abs" style="left:6px;top:44px" width="140" height="110" viewBox="1675 120 140 110" fill="none" stroke="#d8d8d8" stroke-width="1.200" stroke-linecap="round">
    <g id="eyed"><path d="M1679,138.500L1686,131.500" stroke-width="3"/><path d="M1679.300,138.200L1686,131.500" stroke-width="1" stroke="#535353"/><path d="M1684.500,128.500L1689,133" stroke-width="1.800"/><path d="M1688,129.500L1690,127.500" stroke-width="3.200"/><path d="M1686.500,137h3l-1.500,2Z" fill="#d8d8d8" stroke-width=".5"/></g>
    <use href="#eyed" x="124" y="0"/>
    <path d="M1683,201v12M1677,207h12" stroke-width="1.100"/><path d="M1687.500,211h3l-1.500,2Z" fill="#d8d8d8" stroke-width=".5"/>
    <path d="M1802.500,213.500V203h10" stroke-width="1.100"/><path d="M1802.500,213.500h10.500V205" stroke-width="1.100" stroke-dasharray="1 1.500"/><path d="M1811,201l2.500,2l-2.500,2ZM1800.500,212h4l-2,2.500Z" fill="#d8d8d8" stroke-width=".5"/>
  </svg>
  <span class="it" style="left:12px;top:159px;font-size:11.500px;color:#e6e6e6">文档:65.9M/203.7M</span>
  <span class="it" style="left:12px;top:190px;font-size:11.500px;color:#e6e6e6">点按并拖移以沿想要的方向滚动图像。要</span>
  <span class="it" style="left:12px;top:203px;font-size:11.500px;color:#e6e6e6">用附加选项，使用 Alt 和 Ctrl 键。</span>
  <!-- LAYERS PANEL -->
  <div class="abs" style="left:0;top:276px;width:251px;height:2px;background:#3c3c3c"></div>
  <div class="ptabbar" style="top:278px;height:29px">
    <div class="ptab on" style="left:0;width:44px;height:29px;line-height:28px;font-size:13px">图层</div>
    <div class="ptab" style="left:45px;width:43px;height:29px;line-height:28px;font-size:13px;border-right:1px solid #3a3a3a">通道</div>
    <div class="ptab" style="left:89px;width:45px;height:29px;line-height:28px;font-size:13px;border-right:1px solid #3a3a3a">属性</div>
  </div>
  <svg class="abs" style="left:232px;top:287px" width="12" height="12" viewBox="0 0 12 12" stroke="#cfcfcf" stroke-width="1.200"><path d="M1,2.500h10M1,5.500h10M1,8.500h10"/></svg>
  <!-- filter row -->
  <div class="abs" style="left:6px;top:316px;width:84px;height:19px;background:#4e4e4e;border:1px solid #5c5c5c;border-radius:2px"></div>
  <span class="it" style="left:27px;top:321px;font-size:12px;color:#8e8e8e">类型</span>
  <svg class="abs" style="left:0;top:310px;z-index:2" width="251" height="160" viewBox="1669 386 251 160" fill="none" stroke="#9c9c9c" stroke-width="1.200" stroke-linecap="round" stroke-linejoin="round">
    <circle cx="1685.500" cy="399.500" r="3" stroke="#9a9a9a"/><path d="M1683.500,402L1680.500,405.500" stroke="#9a9a9a" stroke-width="1.600"/>
    <path d="M1748,399.500l3,3l3,-3" stroke="#6a6a6a"/>
    <rect x="1775.500" y="396.500" width="11" height="9"/><path d="M1777,404l2.500,-3l2,2l1.500,-1.500l2,2.500Z" fill="#9c9c9c" stroke-width=".5"/>
    <circle cx="1805.500" cy="401" r="5"/><path d="M1802,404.500a5,5 0 0 1 7,-7Z" fill="#9c9c9c" stroke="none"/>
    <path d="M1825,396.500h10v2.500h-1l-.4,-1.300h-2.400v7.500l1.300,.3v.9h-5v-.9l1.300,-.3v-7.500h-2.400l-.4,1.300h-1Z" fill="#9c9c9c" stroke="none"/>
    <rect x="1849.500" y="397" width="8" height="8"/><g fill="#9c9c9c" stroke="none"><rect x="1848" y="395.500" width="3" height="3"/><rect x="1856" y="395.500" width="3" height="3"/><rect x="1848" y="403.500" width="3" height="3"/><rect x="1856" y="403.500" width="3" height="3"/></g>
    <path d="M1876.500,396h4l2.500,2.500v7.500h-6.500Z"/><rect x="1873" y="401" width="5" height="5" fill="#9c9c9c" stroke="none"/>
    <circle cx="1905" cy="396.500" r="3.800" fill="#8c8c8c" stroke="none"/><rect x="1902" y="401" width="6" height="6" rx="2" fill="#4a4a4a" stroke="none"/>
    <!-- blend row chevrons -->
    <path d="M1778,427.500l3,3l3,-3" stroke="#6a6a6a"/><path d="M1898.500,427.500l3,3l3,-3" stroke="#6a6a6a"/><path d="M1898.500,454.500l3,3l3,-3" stroke="#6a6a6a"/>
    <!-- lock row icons -->
    <rect x="1713.500" y="450.500" width="10" height="10" stroke-width="1"/><path d="M1714,451h3v3h-3zM1720,451h3v3h-3zM1717,454h3v3h-3zM1714,457h3v3h-3zM1720,457h3v3h-3z" fill="#9c9c9c" stroke="none"/>
    <path d="M1746.500,450L1740,458.500L1738.500,457.500Z" fill="#9c9c9c" stroke-width=".8"/><path d="M1738.500,458.500c-1.500,0-2,1.500-3,3c2.500,.5,4.500-.5,4.500-2Z" fill="#9c9c9c" stroke-width=".6"/>
    <path d="M1762.500,449.500v12M1756.500,455.500h12" stroke-width="1.200"/><path d="M1760.500,451.500l2,-2.500l2,2.500ZM1760.500,459.500l2,2.500l2,-2.500ZM1758.500,453.500l-2.500,2l2.500,2ZM1766.500,453.500l2.500,2l-2.500,2Z" fill="#9c9c9c" stroke-width=".4"/>
    <path d="M1781.500,449v10.500h10.500M1778.500,452.500h8l3,3v6.500" stroke-width="1.200"/>
    <rect x="1802" y="455" width="9.500" height="7" fill="#9c9c9c" stroke="none"/><path d="M1804,455v-2.200a2.700,2.700 0 0 1 5.400,0v2.200" stroke-width="1.400"/>
  </svg>
  <div class="abs" style="left:0;top:339px;width:251px;height:1px;background:#464646"></div>
  <!-- blend row -->
  <div class="abs" style="left:7px;top:343px;width:113px;height:20px;background:#4e4e4e;border:1px solid #5a5a5a;border-radius:2px"></div>
  <span class="it" style="left:13px;top:348px;font-size:12px;color:#8e8e8e">正常</span>
  <span class="it" style="left:130px;top:348px;font-size:12px;color:#a4a4a4">不透明度:</span>
  <div class="abs" style="left:186px;top:343px;width:54px;height:20px;background:#4e4e4e;border:1px solid #5a5a5a;border-radius:2px"></div>
  <div class="abs" style="left:224px;top:343px;width:1px;height:20px;background:#5a5a5a"></div>
  <span class="it" style="left:190px;top:347px;font-size:11.500px;color:#7a7a7a">100%</span>
  <div class="abs" style="left:0;top:366px;width:251px;height:1px;background:#464646"></div>
  <!-- lock row -->
  <span class="it" style="left:7px;top:375px;font-size:12px;color:#8e8e8e">锁定:</span>
  <span class="it" style="left:154px;top:375px;font-size:12px;color:#a4a4a4">填充:</span>
  <div class="abs" style="left:186px;top:370px;width:54px;height:20px;background:#4e4e4e;border:1px solid #5a5a5a;border-radius:2px"></div>
  <div class="abs" style="left:224px;top:370px;width:1px;height:20px;background:#5a5a5a"></div>
  <span class="it" style="left:190px;top:374px;font-size:11.500px;color:#7a7a7a">100%</span>
  <!-- layer rows -->
  <div class="abs" style="left:0;top:394px;width:235px;height:117px;background:#484848"></div>
  <div class="lrow" style="top:395px"><div class="lsel"></div></div>
  <div class="lrow" style="top:424px"></div>
  <div class="lrow" style="top:453px"></div>
  <div class="lrow" style="top:482px"></div>
  <div class="abs" style="left:235px;top:394px;width:16px;height:530px;background:#4d4d4d"></div>
  <span class="it ln" style="left:122px;top:404.500px">图层 1 拷贝 3</span>
  <span class="it ln" style="left:75px;top:433.500px">图层 1 拷贝 2</span>
  <span class="it ln" style="left:75px;top:462.500px">图层 1</span>
  <span class="it ln" style="left:75px;top:491.500px">背景</span>
  <svg class="abs" style="left:0;top:394px" width="240" height="118" viewBox="1669 470 240 118">
    <defs>
      <pattern id="chk" width="6" height="6" patternUnits="userSpaceOnUse"><rect width="6" height="6" fill="#fff"/><rect width="3" height="3" fill="#ccc"/><rect x="3" y="3" width="3" height="3" fill="#ccc"/></pattern>
      <g id="fl"><circle cx="0" cy="0" r="6" fill="#f3b41c" stroke="#f6c22e" stroke-width="2.400" stroke-dasharray="2 1.300"/><circle cx="0" cy="0" r="4.500" fill="#f0a01a"/><circle cx="-.5" cy=".5" r="1.300" fill="#3a1c10"/></g>
      <g id="eye"><path d="M-6.500,0c2,-3.200,4.300,-4.600,6.500,-4.600s4.500,1.400,6.500,4.600c-2,3.200-4.300,4.600-6.500,4.600s-4.500-1.400-6.500-4.600Z" fill="#e0e0e0"/><circle cx="0" cy="0" r="2.700" fill="#535353"/><circle cx="0" cy="0" r="1.300" fill="#e0e0e0"/></g>
    </defs>
    <use href="#eye" x="1684.500" y="485"/><use href="#eye" x="1684.500" y="543.500"/><use href="#eye" x="1684.500" y="572.500"/>
    <rect x="1678.500" y="508.500" width="10.500" height="11" fill="none" stroke="#5e5e5e"/>
    <rect x="1703" y="474" width="32" height="22" fill="#3a3a3a"/><rect x="1704" y="475" width="30" height="20" fill="url(#chk)"/><use href="#fl" x="1719" y="485"/>
    <rect x="1703" y="503" width="32" height="22" fill="#3a3a3a"/><rect x="1704" y="504" width="30" height="20" fill="url(#chk)"/><use href="#fl" x="1719" y="514"/>
    <rect x="1703" y="532" width="32" height="22" fill="#3a3a3a"/><rect x="1704" y="533" width="30" height="20" fill="#0a22a8"/>
    <rect x="1703" y="561" width="32" height="22" fill="#3a3a3a"/><rect x="1704" y="562" width="30" height="20" fill="#fff"/><use href="#fl" x="1719" y="572"/>
    <!-- link -->
    <g fill="none" stroke="#d8d8d8" stroke-width="1.300"><rect x="1739.800" y="480" width="3.600" height="5.500" rx="1.800"/><rect x="1739.800" y="484.500" width="3.600" height="5.500" rx="1.800"/></g>
    <!-- mask thumb -->
    <rect x="1750" y="473" width="32" height="24" fill="#000"/><circle cx="1765.500" cy="485.200" r="7.500" fill="#fff"/>
    <path d="M1748.500,478v-5.500h10M1773,472.500h10.500v5.500M1783.500,492v5.500h-10.500M1758.500,497.500h-10v-5.500" fill="none" stroke="#fff" stroke-width="1.300"/>
    <!-- lock -->
    <rect x="1877.500" y="570.500" width="9" height="7.500" fill="none" stroke="#d8d8d8" stroke-width="1.300"/><path d="M1879.500,570.500v-2.300a2.500,2.500 0 0 1 5,0v2.300" fill="none" stroke="#d8d8d8" stroke-width="1.300"/><rect x="1881.300" y="573.200" width="1.500" height="2" fill="#d8d8d8"/>
  </svg>
  <!-- bottom bar -->
  <div class="abs" style="left:0;top:918px;width:251px;height:1px;background:#464646"></div>
  <svg class="abs" style="left:40px;top:920px" width="200" height="22" viewBox="1709 996 200 22" fill="none" stroke="#8e8e8e" stroke-width="1.200" stroke-linecap="round">
    <rect x="1717.500" y="1003.500" width="6.500" height="5" rx="2.500"/><rect x="1722" y="1003.500" width="6.500" height="5" rx="2.500"/>
    <text x="1744.500" y="1010" font-family="Liberation Serif,serif" font-style="italic" font-size="12" fill="#8e8e8e" stroke="none">fx</text>
    <rect x="1770.500" y="1001" width="11.500" height="9.500" fill="#8e8e8e" stroke="none"/><circle cx="1776.200" cy="1005.700" r="2.800" fill="#535353" stroke="none"/>
    <circle cx="1804" cy="1006" r="5"/><path d="M1800.500,1009.500a5,5 0 0 1 7,-7Z" fill="#8e8e8e" stroke="none"/>
    <path d="M1824.500,1001.500h4.500l1.500,1.500h6.500v7.500h-12.500Z" fill="#8e8e8e" stroke-width=".8"/>
    <path d="M1852.500,1001.500h10v6.500l-3,3h-7Z"/><path d="M1859.500,1011v-3h3" />
    <path d="M1879.500,1003.500h10M1882.500,1003v-1.500h4v1.500M1880.500,1004l.8,8h6.400l.8,-8M1883.200,1005.500v5M1885.800,1005.500v5"/>
  </svg>
</div>
<!-- DIALOG -->
<div id="dlg" class="abs">
  <div id="dlgtitle" class="abs"></div>
  <span class="t" style="left:9px;top:11px;font-size:14.500px;line-height:17px;height:17px;color:#8c8c8c;font-weight:300">高斯模糊</span>
  <svg class="abs" style="left:290px;top:10px" width="16" height="16" viewBox="0 0 16 16" stroke="#8a8a8a" stroke-width="1.100" fill="none"><path d="M2,2L13.500,14M13.500,2L2,14"/></svg>
  <div class="abs" style="left:11px;top:48px;width:206px;height:206px;background:#fff"></div>
  <div class="abs pill" style="left:233px;top:47px;border-color:#d4d4d4">确定</div>
  <div class="abs pill" style="left:233px;top:82px;border-color:#6c6c6c">取消</div>
  <div class="abs" style="left:233px;top:119px;width:13px;height:13px;background:#ececec;border-radius:2px"></div>
  <svg class="abs" style="left:233px;top:119px" width="13" height="13" viewBox="0 0 13 13" fill="none" stroke="#333" stroke-width="1.900"><path d="M2.800,6.500L5.500,9.300L10.300,3.500"/></svg>
  <span class="t" style="left:255px;top:119px;font-size:13px;color:#f0f0f0">预览(P)</span>
  <svg class="abs" style="left:50px;top:260px" width="140" height="20" viewBox="1408 523 140 20" fill="none" stroke="#d8d8d8" stroke-width="1.300" stroke-linecap="round">
    <circle cx="1416.500" cy="531.500" r="4.300"/><path d="M1419.800,535L1423.500,539" stroke-width="1.800"/><path d="M1414.300,531.500h4.400"/>
    <circle cx="1524.500" cy="531.500" r="4.300"/><path d="M1527.800,535L1531.500,539" stroke-width="1.800"/><path d="M1522.300,531.500h4.400M1524.500,529.300v4.400"/>
  </svg>
  <span class="t" style="left:98px;top:263px;font-size:12px;color:#e0e0e0">100%</span>
  <span class="t" style="left:25px;top:292px;font-size:12.500px;color:#e8e8e8">半径(R):</span>
  <div class="abs" style="left:76px;top:289px;width:57px;height:20px;background:#454545;border:1px solid #666"></div>
  <span class="t" style="left:80px;top:292px;font-size:12.500px;color:#e8e8e8">3.0</span>
  <span class="t" style="left:143px;top:292px;font-size:12.500px;color:#e8e8e8">像素</span>
  <div class="abs" style="left:18px;top:319px;width:192px;height:2px;background:#787878;border-radius:1px"></div>
  <svg class="abs" style="left:42px;top:323px" width="13" height="11" viewBox="0 0 13 11"><path d="M6.500,.8L11,6.500V10H2V6.500Z" fill="#f4f4f4" stroke="#bbb" stroke-width=".6"/></svg>
</div>
<!-- WATERMARK -->
<div id="wm" class="abs" style="left:1438px;top:940px;width:470px;height:64px;white-space:nowrap;color:#fff;text-shadow:3px 3px 0 #000,2px 2px 0 #000,1px 1px 0 #000;font-family:'Liberation Sans','Noto Sans CJK SC',sans-serif;line-height:64px"><span style="font-size:48.500px;font-weight:900">头条</span><span style="font-size:49px;font-weight:500;margin-left:9px">@花花平面设计</span></div>
<!-- BOTTOM STRIP -->
<div class="abs" style="left:0;top:1019px;width:1920px;height:1px;background:#383838"></div>
<div class="abs" style="left:0;top:1020px;width:1920px;height:8px;background:linear-gradient(90deg,#e9eef7,#dfe7f5 40%,#e8edf8 70%,#eef2f9)"></div>
</body>
</html>
